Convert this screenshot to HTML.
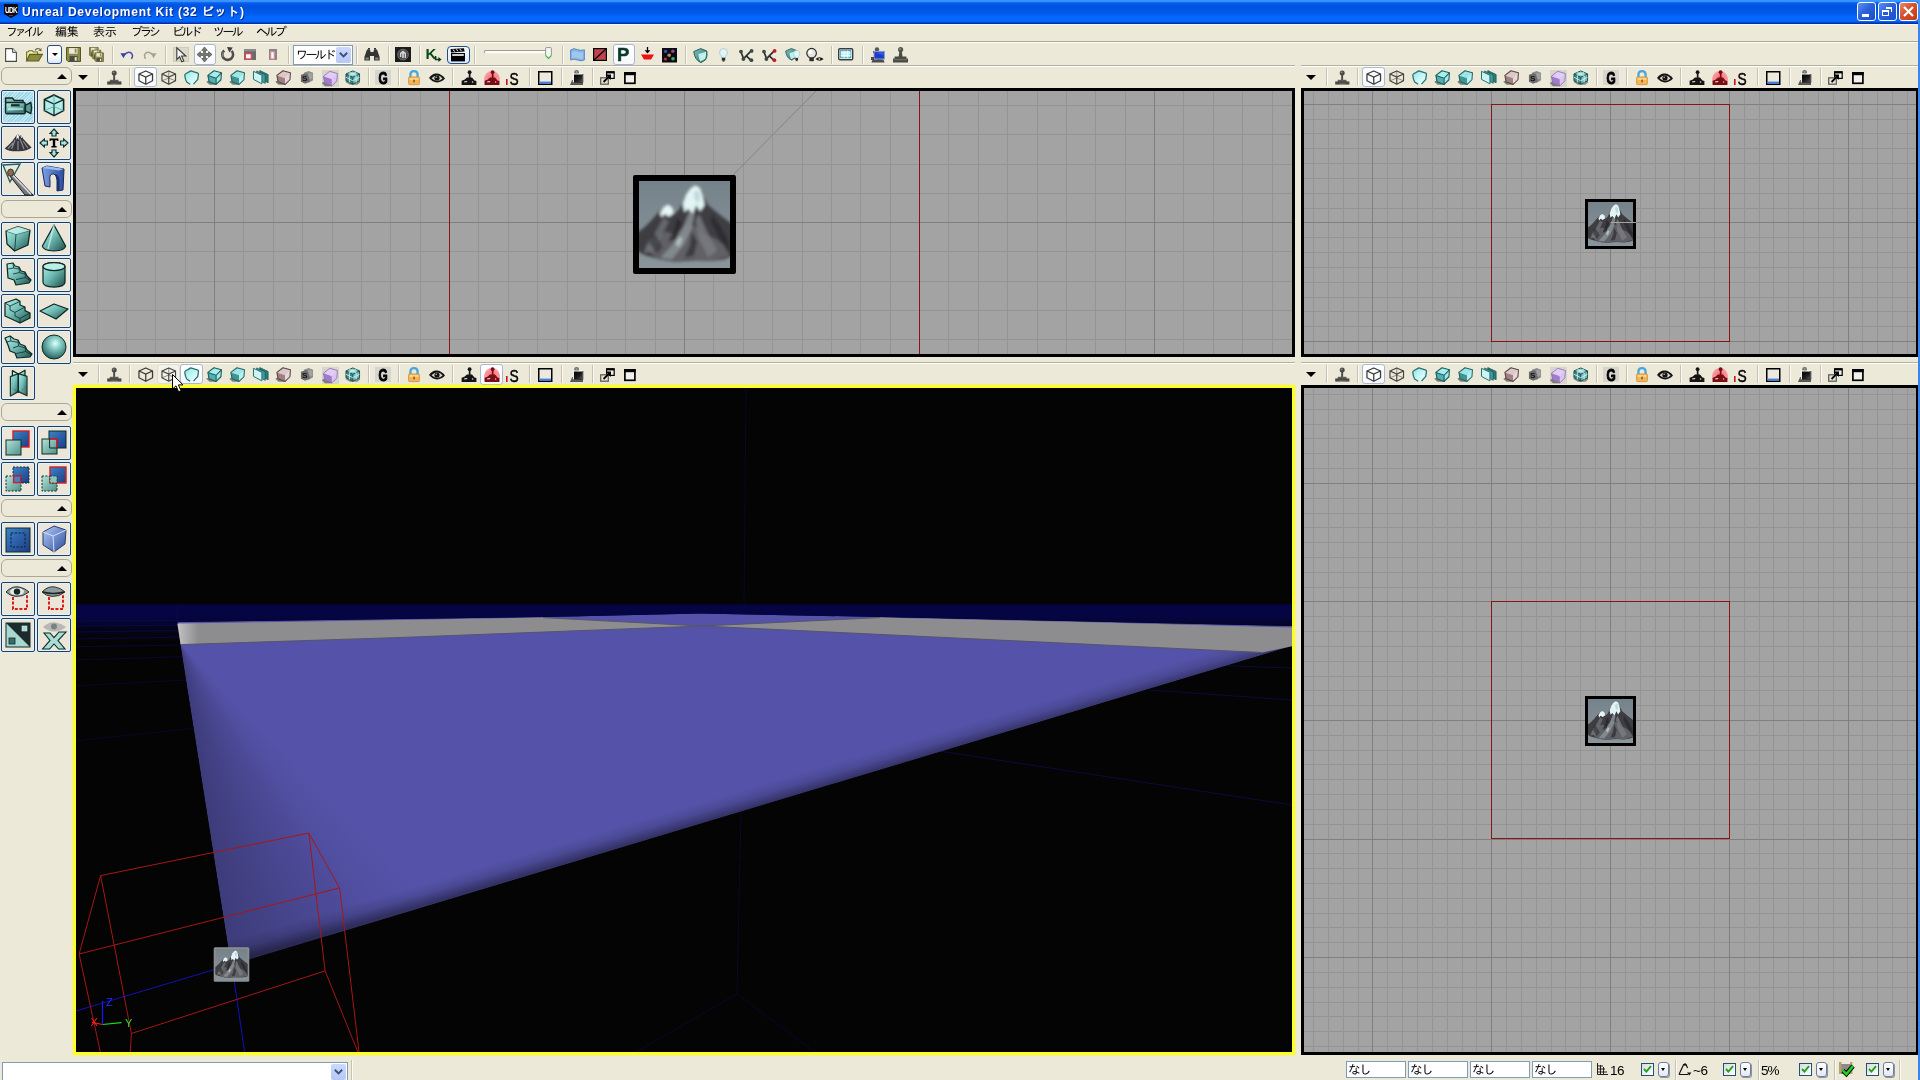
<!DOCTYPE html>
<html lang="ja"><head><meta charset="utf-8"><title>Unreal Development Kit</title>
<style>
html,body{margin:0;padding:0}
body{width:1920px;height:1080px;position:relative;overflow:hidden;background:#ece9d8;
font-family:"Liberation Sans","IPAGothic","Noto Sans CJK JP",sans-serif;font-size:12px;color:#000}
.a{position:absolute}
.jp,#menu span,.tx{will-change:transform}
.jp{font-family:"Liberation Sans","IPAGothic","Noto Sans CJK JP",sans-serif}
svg{position:absolute;overflow:visible}
#title{left:0;top:0;width:1920px;height:24px;
background:linear-gradient(180deg,#3a96fc 0px,#3a94fc 1.4px,#0c66f2 2.6px,#0558e8 4px,#0054e0 6px,#0054e0 8px,#0057e8 11px,#005cf0 14px,#0466fa 16.5px,#0468fc 20px,#0462f4 21.5px,#0444cc 22.6px,#0030a6 23.4px,#0030a6 24px)}
#title .t{left:22px;top:5px;color:#fff;font-weight:bold;font-size:12px;letter-spacing:.75px;white-space:nowrap;text-shadow:1px 1px 0 #0a2a88}
#menu{left:0;top:24px;width:1918px;height:17px;background:#ece9d8;border-top:1px solid #f6f9fc;box-sizing:border-box}
#menu span{position:absolute;top:1px;font-size:12px;line-height:13px;white-space:nowrap}
.hl{height:1px;background:#aca899}
.hw{height:1px;background:#fff}
.sep{width:1px;background:#c5c2b2;box-shadow:1px 0 0 #fbfaf6}
.vp{box-sizing:border-box;border:3px solid #000;background:#a3a3a3;overflow:hidden}
.btn{box-sizing:border-box;border:1px solid #b4c4dc;border-radius:3px;background:linear-gradient(180deg,#fff,#f4f6fb)}
.lbtn{box-sizing:border-box;width:34px;height:34px;border:1px solid #1e3f60;border-radius:2px;background:#ece6d8;box-shadow:0 0 0 1px #e2edf3,inset 0 0 0 1px #e6f1f8}
.bar{box-sizing:border-box;left:1px;width:71px;height:18px;border:1px solid #aaa798;border-radius:6px;background:#ece9d8}
.tri-u{width:0;height:0;border-left:5px solid transparent;border-right:5px solid transparent;border-bottom:5px solid #000}
.tri-d{width:0;height:0;border-left:5px solid transparent;border-right:5px solid transparent;border-top:5px solid #000}
.fld{box-sizing:border-box;height:17px;border:1px solid #7f9db9;background:#fff;font-size:12.5px;line-height:16px;padding-left:1px;letter-spacing:-1.6px}
.chk{box-sizing:border-box;width:13px;height:13px;border:1px solid #1c5180;background:linear-gradient(135deg,#dcdcd4,#fff)}
.dd{box-sizing:border-box;width:11px;height:15px;border:1px solid #6b7f9d;border-radius:3px;background:linear-gradient(180deg,#fff,#e4e8f0);box-shadow:1px 1px 0 #8a94a8}
</style></head><body>

<div id="title" class="a">
<svg class="a tx" style="left:3px;top:3px" width="16" height="16" viewBox="0 0 16 16"><path d="M1 1.5 Q1 1 1.5 1 H14.5 Q15 1 15 1.5 V11 L8 15 L1 11 Z" fill="#0c0c10"/><text x="8" y="10" font-family="Liberation Sans,sans-serif" font-size="8.5" font-weight="bold" fill="#fff" text-anchor="middle" letter-spacing="-0.9" textLength="12" lengthAdjust="spacingAndGlyphs">UDK</text><rect x="6" y="12" width="4" height="1" fill="#a02020"/></svg>
<div class="a t jp">Unreal Development Kit (32 ビット)</div>
<div class="a" style="left:1857px;top:2px;width:19px;height:19px;box-sizing:border-box;border:1px solid #fff;border-radius:3px;background:linear-gradient(135deg,#5c92f4 0%,#2a62dc 45%,#1c4cc8 100%)"><div class="a" style="left:4px;top:11px;width:7px;height:3px;background:#fff"></div></div>
<div class="a" style="left:1878px;top:2px;width:19px;height:19px;box-sizing:border-box;border:1px solid #fff;border-radius:3px;background:linear-gradient(135deg,#5c92f4 0%,#2a62dc 45%,#1c4cc8 100%)"><div class="a" style="left:7px;top:4px;width:6px;height:5px;box-sizing:border-box;border-right:1px solid #fff;border-top:2px solid #fff"></div><div class="a" style="left:3px;top:7px;width:7px;height:6px;box-sizing:border-box;border:1px solid #fff;border-top:2px solid #fff;background:#2a5cd4"></div></div>
<div class="a" style="left:1899px;top:2px;width:19px;height:19px;box-sizing:border-box;border:1px solid #fff;border-radius:3px;background:linear-gradient(135deg,#e88a6c 0%,#d8502c 45%,#c03a18 100%)"><svg style="left:3px;top:3px" width="11" height="11" viewBox="0 0 11 11"><path d="M1 1 L10 10 M10 1 L1 10" stroke="#fff" stroke-width="2.2" fill="none"/></svg></div>
</div>
<div id="menu" class="a jp">
<span style="left:6px;letter-spacing:-3.4px">ファイル</span>
<span style="left:55px;letter-spacing:-0.2px">編集</span>
<span style="left:93px;letter-spacing:-0.2px">表示</span>
<span style="left:131px;letter-spacing:-3px">ブラシ</span>
<span style="left:172px;letter-spacing:-2.8px">ビルド</span>
<span style="left:213px;letter-spacing:-2.6px">ツール</span>
<span style="left:256px;letter-spacing:-2.6px">ヘルプ</span>
</div>
<div class="a hl" style="left:0;top:41px;width:1918px"></div><div class="a hw" style="left:0;top:42px;width:1918px"></div>
<svg style="left:5px;top:48px" width="12" height="14" viewBox="0 0 12 14" ><path d="M.6 .6 H7.6 L11.4 4.4 V13.4 H.6 Z" fill="#fff" stroke="#4a4a4a" stroke-width="1.1"/><path d="M7.6 .6 V4.4 H11.4" fill="#e4e4e4" stroke="#4a4a4a" stroke-width="1"/></svg><svg style="left:26px;top:47px" width="17" height="15" viewBox="0 0 17 15" ><path d="M9 3.4 Q11.5 .2 14.4 2.6" fill="none" stroke="#6a6a3a" stroke-width="1.1"/><path d="M15.6 1 L15.4 4.6 L12.4 3.4 Z" fill="#6a6a3a"/><path d="M.6 14 V5 H2 L3 3.8 H6.4 L7.4 5 H11.6 V7.4" fill="#f6f2a0" stroke="#6e6e32" stroke-width="1.1"/><path d="M.6 14 L3.6 7.4 H16.4 L12.6 14 Z" fill="#8a8c3c" stroke="#5a5c24" stroke-width="1.1"/></svg><div class="a" style="left:47px;top:45px;width:14.5px;height:19px;box-sizing:border-box;border:1px solid #214f84;border-radius:3px;background:linear-gradient(180deg,#fff 0%,#fff 55%,#dfe6f2 100%)"></div><div class="a" style="left:51.6px;top:53px;width:0;height:0;border-left:3px solid transparent;border-right:3px solid transparent;border-top:3.4px solid #000"></div><svg style="left:66px;top:47px" width="15" height="15" viewBox="0 0 15 15" ><g transform="translate(0.5,0.5) scale(1)"><path d="M0 0 H14 V14 H1.6 L0 12.4 Z" fill="#8b8c4c" stroke="#55561e" stroke-width="1"/><rect x="2.6" y=".6" width="8.4" height="5.6" fill="#ece9d8"/><rect x="8.2" y="1.2" width="1.8" height="4" fill="#8b8c4c"/><rect x="3" y="8.6" width="8" height="5.4" fill="#4a4a42"/><rect x="8.2" y="9.6" width="2" height="3.6" fill="#ece9d8"/></g></svg><svg style="left:89px;top:47px" width="15" height="15" viewBox="0 0 15 15" ><g transform="translate(0.5,0.5) scale(0.62)"><path d="M0 0 H14 V14 H1.6 L0 12.4 Z" fill="#8b8c4c" stroke="#55561e" stroke-width="1"/><rect x="2.6" y=".6" width="8.4" height="5.6" fill="#ece9d8"/><rect x="8.2" y="1.2" width="1.8" height="4" fill="#8b8c4c"/><rect x="3" y="8.6" width="8" height="5.4" fill="#4a4a42"/><rect x="8.2" y="9.6" width="2" height="3.6" fill="#ece9d8"/></g><g transform="translate(3.2,3.2) scale(0.62)"><path d="M0 0 H14 V14 H1.6 L0 12.4 Z" fill="#8b8c4c" stroke="#55561e" stroke-width="1"/><rect x="2.6" y=".6" width="8.4" height="5.6" fill="#ece9d8"/><rect x="8.2" y="1.2" width="1.8" height="4" fill="#8b8c4c"/><rect x="3" y="8.6" width="8" height="5.4" fill="#4a4a42"/><rect x="8.2" y="9.6" width="2" height="3.6" fill="#ece9d8"/></g><g transform="translate(5.8,5.8) scale(0.62)"><path d="M0 0 H14 V14 H1.6 L0 12.4 Z" fill="#8b8c4c" stroke="#55561e" stroke-width="1"/><rect x="2.6" y=".6" width="8.4" height="5.6" fill="#ece9d8"/><rect x="8.2" y="1.2" width="1.8" height="4" fill="#8b8c4c"/><rect x="3" y="8.6" width="8" height="5.4" fill="#4a4a42"/><rect x="8.2" y="9.6" width="2" height="3.6" fill="#ece9d8"/></g></svg><div class="a sep" style="left:111.5px;top:46px;height:18px"></div><svg style="left:120px;top:50px" width="14" height="10" viewBox="0 0 14 10" ><path d="M4 5.2 Q8 .6 11.4 3.2 Q13.6 5.6 11.4 8.8" fill="none" stroke="#4a4ab0" stroke-width="1.5"/><path d="M.4 3.2 L5.8 3.2 L3.6 8.2 Z" fill="#3c3ca8"/></svg><svg style="left:143px;top:50px" width="14" height="10" viewBox="0 0 14 10" ><path d="M10 5.2 Q6 .6 2.6 3.2 Q.4 5.6 2.6 8.8" fill="none" stroke="#a4a29a" stroke-width="1.5"/><path d="M13.6 3.2 L8.2 3.2 L10.4 8.2 Z" fill="#a4a29a"/></svg><div class="a sep" style="left:165px;top:46px;height:18px"></div><div class="a" style="left:173px;top:47px;width:15.5px;height:15px;background:#dcd9ca;border:1px solid #cfccbc;box-sizing:border-box"></div><svg style="left:176px;top:47px" width="11" height="16" viewBox="0 0 11 16" ><path d="M.8 .8 V12.6 L3.6 9.8 L5.8 14.8 L7.8 13.9 L5.6 9 H9.8 Z" fill="#f4f4f4" stroke="#3a3a3a" stroke-width="1.1"/></svg><div class="a" style="left:193.5px;top:44px;width:22px;height:21px;box-sizing:border-box;border:1px solid #a9b7d2;border-radius:3px;background:linear-gradient(180deg,#fff,#f6f8fc)"></div><svg style="left:197px;top:47px" width="15" height="15" viewBox="0 0 15 15" ><path d="M7.5 0 L10.4 3.4 H8.4 V6.6 H11.6 V4.6 L15 7.5 L11.6 10.4 V8.4 H8.4 V11.6 H10.4 L7.5 15 L4.6 11.6 H6.6 V8.4 H3.4 V10.4 L0 7.5 L3.4 4.6 V6.6 H6.6 V3.4 H4.6 Z" fill="#7a7a78" stroke="#4a4a48" stroke-width=".7"/></svg><svg style="left:219.5px;top:47px" width="15" height="15" viewBox="0 0 15 15" ><path d="M4.2 3.4 A5.4 5.4 0 1 0 11.6 3.8" fill="none" stroke="#4e4e4e" stroke-width="2.6"/><path d="M7 0 L12.8 .6 L9.4 5.6 Z" fill="#3c3c3c"/><path d="M3.4 5 A4.4 4.4 0 0 0 3 10" fill="none" stroke="#8c8c8c" stroke-width="1"/></svg><svg style="left:243.5px;top:49px" width="12" height="11" viewBox="0 0 12 11" ><rect x="0" y="0" width="12" height="11" fill="#6b6b6b"/><rect x="0" y="0" width="12" height="2.4" fill="#8a8a8a"/><rect x="1.4" y="4.6" width="6" height="5.4" fill="#fff" stroke="#d84c5c" stroke-width="1.4"/></svg><svg style="left:268.5px;top:49px" width="8" height="11" viewBox="0 0 8 11" ><rect x="0" y="0" width="8" height="11" fill="#8a8686"/><rect x="1.6" y="2.6" width="3.8" height="7.4" fill="#fdf6f6" stroke="#d08c98" stroke-width="1.2"/></svg><div class="a sep" style="left:288px;top:46px;height:18px"></div><div class="a" style="left:293px;top:45px;width:60px;height:20px;box-sizing:border-box;border:1px solid #7f9db9;background:#fff"></div><div class="a jp" style="left:296px;top:49px;font-size:12px;line-height:12px;letter-spacing:-2.6px;white-space:nowrap">ワールド</div><div class="a" style="left:336px;top:47px;width:15px;height:16px;border-radius:2px;background:linear-gradient(180deg,#cbd9fb,#b6c8f4)"></div><svg style="left:339px;top:52px" width="9" height="6" viewBox="0 0 9 6" ><path d="M.8 .8 L4.5 4.4 L8.2 .8" fill="none" stroke="#3c507c" stroke-width="1.9"/></svg><div class="a sep" style="left:356px;top:46px;height:18px"></div><svg style="left:364px;top:48px" width="16" height="13" viewBox="0 0 16 13" ><path d="M3 1.4 H6 L6.6 4 H9.4 L10 1.4 H13 L15.6 9 V12.6 H10 V8 H6 V12.6 H.4 V9 Z" fill="#343434"/><rect x="1.6" y="9.6" width="3.2" height="2" fill="#8a8a8a"/><rect x="11.2" y="9.6" width="3.2" height="2" fill="#8a8a8a"/><rect x="4" y="0" width="2" height="1.6" fill="#343434"/><rect x="10" y="0" width="2" height="1.6" fill="#343434"/></svg><div class="a sep" style="left:387.5px;top:46px;height:18px"></div><svg style="left:395px;top:47px" width="16" height="15" viewBox="0 0 16 15" ><rect x="0" y="0" width="16" height="15" fill="#1c1c1c"/><circle cx="8" cy="7.6" r="5.4" fill="#4c4c4c"/><circle cx="8" cy="7.6" r="5.4" fill="none" stroke="#777" stroke-width=".8"/><path d="M5 6 L8 3.6 L11 6 V11 H9.6 V6.8 H8.8 V11 H7.2 V6.8 H6.4 V10 H5 Z" fill="#d4d4d4"/></svg><div class="a sep" style="left:418.5px;top:46px;height:18px"></div><svg style="left:426px;top:47px" width="16" height="15" viewBox="0 0 16 15"  class="tx"><text x="-.4" y="11.6" font-family="Liberation Sans,sans-serif" font-weight="bold" font-size="15" fill="#0a4a14">K</text><path d="M9.6 9 V12.6 H13" fill="none" stroke="#0a3a12" stroke-width="1.5"/><path d="M12.4 10 L15.6 12.6 L12.4 15 Z" fill="#0a3a12"/></svg><div class="a" style="left:446.5px;top:45.5px;width:23px;height:18.5px;box-sizing:border-box;border:1px solid #1f4e86;border-radius:4px;background:linear-gradient(180deg,#f4f8ff,#dde8f8)"></div><svg style="left:450px;top:48px" width="16" height="14" viewBox="0 0 16 14" ><path d="M.6 1 L14 .2 L14.6 3.4 L1 4.6 Z" fill="#000"/><path d="M3 1.4 L4.6 3.6 M6.4 1.2 L8 3.3 M9.8 1 L11.4 3" stroke="#fff" stroke-width="1"/><rect x="1" y="5" width="14" height="8.4" fill="#000"/><rect x="2.2" y="6.2" width="11.6" height="1.6" fill="#fff"/></svg><div class="a sep" style="left:474px;top:46px;height:18px"></div><div class="a" style="left:484px;top:50px;width:64px;height:4px;box-sizing:border-box;border:1px solid;border-color:#9d9c90 #f2f0e6 #f2f0e6 #9d9c90;border-radius:2px;background:#fcfcfa"></div><svg style="left:545px;top:47px" width="7" height="12" viewBox="0 0 7 12" ><path d="M.6 1.4 Q.6 .6 1.4 .6 H5.6 Q6.4 .6 6.4 1.4 V8.4 L3.5 11.4 L.6 8.4 Z" fill="#f6f6f2" stroke="#8c9a8c" stroke-width="1"/><path d="M.8 8.6 L3.5 11.4 L6.2 8.6" fill="none" stroke="#3cb84c" stroke-width="1.2"/></svg><div class="a sep" style="left:561.5px;top:46px;height:18px"></div><svg style="left:570px;top:48px" width="15" height="14" viewBox="0 0 15 14" ><path d="M.6 2 Q4 -.4 7.4 1.6 Q11 3 14.4 1.8 V12 Q11 13.6 7.4 12 Q4 10.4 .6 12 Z" fill="#86b4e4" stroke="#5a8cc4" stroke-width="1"/><path d="M2 4 Q5 2.4 8 4 Q11 5 13 4.2 V10.4 Q10 11.4 7.4 10 Q4.6 8.8 2 10 Z" fill="#a6cdf0" opacity=".8"/></svg><svg style="left:593px;top:48px" width="14" height="13" viewBox="0 0 14 13" ><rect x=".6" y=".6" width="12.8" height="11.8" fill="#c2424c" stroke="#000" stroke-width="1.2"/><path d="M1 12 L13 1" stroke="#000" stroke-width="1.2"/></svg><div class="a" style="left:612.5px;top:44px;width:22.5px;height:21px;box-sizing:border-box;border:1px solid #a9b7d2;border-radius:3px;background:linear-gradient(180deg,#fff,#f6f8fc)"></div><div class="a tx" style="left:617.2px;top:46.4px;font:bold 18.5px/18px 'Liberation Sans',sans-serif;color:#0b3a2a;-webkit-text-stroke:.5px #0b3a2a">P</div><svg style="left:641px;top:47px" width="13" height="14" viewBox="0 0 13 14" ><path d="M6.5 0 V5" stroke="#000" stroke-width="1.3"/><path d="M3.6 3.2 H9.4 L6.5 6.4 Z" fill="#000"/><path d="M0 7.6 H13 L10 12.6 H3 Z" fill="#f01010"/></svg><svg style="left:662px;top:47.5px" width="15" height="14.5" viewBox="0 0 15 14.5" ><rect x="0" y="0" width="15" height="14.5" fill="#0c0c10"/><circle cx="3.6" cy="3.4" r="1.7" fill="#3c58c4" opacity=".9"/><circle cx="10.8" cy="3.2" r="1.7" fill="#a04cb4" opacity=".9"/><circle cx="7.2" cy="7.2" r="1.8" fill="#c89a58" opacity=".9"/><circle cx="3.4" cy="11" r="1.6" fill="#c03a3a" opacity=".9"/><circle cx="11" cy="10.8" r="1.8" fill="#3cc470" opacity=".9"/></svg><div class="a sep" style="left:684.5px;top:46px;height:18px"></div><svg style="left:693px;top:47.5px" width="15" height="15" viewBox="0 0 15 15" ><defs><linearGradient id="rc1" x1="0" y1="0" x2="1" y2="1"><stop offset="0" stop-color="#7ec4c0"/><stop offset="1" stop-color="#2c6c68"/></linearGradient></defs><path d="M7.6 .6 L13.8 3 Q14.8 8 12.6 11.8 L8 14.6 Q1.6 12 .8 3.6 Z" fill="url(#rc1)" stroke="#2c5c5a" stroke-width="1"/><path d="M5.4 6 L13 3.8 Q13.6 8 12 11 L7.4 13.4 Q5.4 10 5.4 6 Z" fill="#bff0ec"/></svg><svg style="left:718.6px;top:48px" width="9" height="14" viewBox="0 0 9 14" ><path d="M4.5 .5 Q8.4 .6 8.4 4.4 Q8.2 6.6 6.6 8 V9.6 H2.4 V8 Q.8 6.6 .6 4.4 Q.6 .6 4.5 .5 Z" fill="#dff6f6" stroke="#a8c4c4" stroke-width=".8"/><rect x="2.8" y="9.8" width="3.4" height="2.8" fill="#2c2c2c"/><rect x="3.6" y="12.4" width="1.8" height="1.2" fill="#2c2c2c"/></svg><svg style="left:738.5px;top:49px" width="15" height="13" viewBox="0 0 15 13" ><path d="M2 3 L4.6 9.6 M4.6 9.6 L12.4 1.6 M7 6.6 L12 11.4" stroke="#2a2a2a" stroke-width="1.6" fill="none"/><circle cx="2" cy="2.6" r="1.9" fill="#3a4a44"/><circle cx="4.4" cy="10" r="1.9" fill="#3a4a44"/><circle cx="12.6" cy="1.9" r="1.9" fill="#3a4a44"/><circle cx="12.4" cy="11.2" r="1.9" fill="#3a4a44"/></svg><svg style="left:761.5px;top:49px" width="15" height="13" viewBox="0 0 15 13" ><path d="M2 3 L4.6 9.6 M4.6 9.6 L12.4 1.6 M7 6.6 L12 11.4" stroke="#2a2a2a" stroke-width="1.6" fill="none"/><circle cx="2" cy="2.6" r="1.9" fill="#3a4a44"/><circle cx="4.4" cy="10" r="1.9" fill="#3a4a44"/><circle cx="12.6" cy="1.9" r="1.9" fill="#c41c24"/><circle cx="12.4" cy="11.2" r="1.9" fill="#c41c24"/></svg><svg style="left:785px;top:47.5px" width="12.5" height="12.5" viewBox="0 0 15 15" ><defs><linearGradient id="rc2" x1="0" y1="0" x2="1" y2="1"><stop offset="0" stop-color="#7ec4c0"/><stop offset="1" stop-color="#2c6c68"/></linearGradient></defs><path d="M7.6 .6 L13.8 3 Q14.8 8 12.6 11.8 L8 14.6 Q1.6 12 .8 3.6 Z" fill="url(#rc2)" stroke="#2c5c5a" stroke-width="1"/><path d="M5.4 6 L13 3.8 Q13.6 8 12 11 L7.4 13.4 Q5.4 10 5.4 6 Z" fill="#bff0ec"/></svg><svg style="left:793.4px;top:50px" width="7.38" height="11.48" viewBox="0 0 9 14" ><path d="M4.5 .5 Q8.4 .6 8.4 4.4 Q8.2 6.6 6.6 8 V9.6 H2.4 V8 Q.8 6.6 .6 4.4 Q.6 .6 4.5 .5 Z" fill="#dff6f6" stroke="#a8c4c4" stroke-width=".8"/><rect x="2.8" y="9.8" width="3.4" height="2.8" fill="#2c2c2c"/><rect x="3.6" y="12.4" width="1.8" height="1.2" fill="#2c2c2c"/></svg><svg style="left:806px;top:47.5px" width="18" height="15" viewBox="0 0 18 15" ><circle cx="5.6" cy="5.2" r="4.8" fill="#e4e4e0" stroke="#2c2c2c" stroke-width="1.2"/><circle cx="4.4" cy="4" r="2" fill="#fff"/><rect x="3.4" y="9.6" width="4.4" height="3.6" fill="#2c2c2c"/><path d="M9.6 11 Q13.4 7.6 17.6 11 Q13.6 14.4 9.6 11 Z" fill="#111"/><circle cx="13.4" cy="11" r="1" fill="#ccc"/></svg><div class="a sep" style="left:830.5px;top:46px;height:18px"></div><svg style="left:838px;top:48px" width="15.5" height="12.5" viewBox="0 0 15.5 12.5" ><rect x=".7" y=".7" width="14" height="11" rx="1.2" fill="#dff" stroke="#3c3c44" stroke-width="1.4"/><rect x="2.6" y="2.6" width="10.2" height="7.2" fill="#b8ecf4" stroke="#4a8a9c" stroke-width=".8"/><path d="M2.6 5 H12.8 M2.6 7.4 H12.8 M6 2.6 V9.8 M9.4 2.6 V9.8" stroke="#f4ffff" stroke-width=".8"/></svg><div class="a sep" style="left:861.5px;top:46px;height:18px"></div><svg style="left:870.5px;top:47px" width="14" height="15.5" viewBox="0 0 14 15.5" ><circle cx="6" cy="2.4" r="2.2" fill="#55555a"/><path d="M2 4 H10 V6 H2 Z" fill="#3c3c40"/><rect x="3" y="4.4" width="10.4" height="7.6" fill="#1c3ccc" stroke="#8ca0c4" stroke-width="1"/><path d="M4 5.4 L12.4 8 V5.4 Z" fill="#3c64ec"/><rect x="6.4" y="12" width="3.4" height="1.4" fill="#8c8c90"/><path d="M.4 15.4 L1.6 12.6 H12.4 L13.6 15.4 Z" fill="#4c4c50"/><rect x="0" y="10" width="3" height="3" fill="#4c4c50"/></svg><svg style="left:893px;top:47px" width="15" height="15.5" viewBox="0 0 15 15.5" ><circle cx="7.6" cy="2.6" r="2.6" fill="#55554f"/><circle cx="7" cy="2" r="1" fill="#8a8a84"/><path d="M6.4 4.6 H8.8 L9.6 10 H5.6 Z" fill="#4a4a44"/><path d="M1.6 9.4 H13.4 V11.4 H15 V15.4 H0 V11.4 H1.6 Z" fill="#4a4a44"/><rect x="1" y="12.2" width="13" height="1" fill="#77776f"/></svg>
<div class="a hl" style="left:73px;top:65px;width:1222px;background:#b4b1a1"></div><div class="a hw" style="left:73px;top:66px;width:1222px"></div>
<div class="a hl" style="left:1301px;top:65px;width:617px;background:#b4b1a1"></div><div class="a hw" style="left:1301px;top:66px;width:617px"></div>
<div class="a hl" style="left:73px;top:362px;width:1222px;background:#b4b1a1"></div><div class="a hw" style="left:73px;top:363px;width:1222px"></div>
<div class="a hl" style="left:1301px;top:362px;width:617px;background:#b4b1a1"></div><div class="a hw" style="left:1301px;top:363px;width:617px"></div>
<div class="a tri-d" style="left:78px;top:75px"></div><div class="a sep" style="left:97.5px;top:68px;height:18px"></div><svg style="left:107px;top:69.5px" width="15" height="15" viewBox="0 0 15 15" ><circle cx="7.2" cy="3" r="2.5" fill="#4a4a46"/><circle cx="6.6" cy="2.3" r=".9" fill="#8c8c88"/><rect x="6.2" y="5" width="1.9" height="6" fill="#4a4a46"/><rect x="2.8" y="9.8" width="8.7" height="2.2" fill="#5a5a56"/><rect x=".2" y="11.4" width="14.2" height="3.2" fill="#4a4a46"/><rect x="4.2" y="13.7" width="6.2" height="1" fill="#9a9890"/></svg><div class="a sep" style="left:128.8px;top:68px;height:18px"></div><div class="a" style="left:134.1px;top:67px;width:22.6px;height:20.4px;box-sizing:border-box;border:1px solid #a9b7d2;border-radius:3px;background:linear-gradient(180deg,#fff,#f6f8fc)"></div><svg style="left:137.9px;top:70px" width="15.5" height="15" viewBox="0 0 16 16"  preserveAspectRatio="none"><polygon points="8,1 15,4.2 15,11.5 8,15.2 1,11.5 1,4.2" fill="none" stroke="#3a3a3a" stroke-width="1.3" stroke-linejoin="round"/><path d="M1 4.2 L8 7.6 L15 4.2 M8 7.6 L8 15.2" stroke="#3a3a3a" stroke-width="1.3" fill="none"/></svg><svg style="left:160.9px;top:70px" width="15.5" height="15" viewBox="0 0 16 16"  preserveAspectRatio="none"><path d="M8 1 V8.6 M8 8.6 L1 11.5 M8 8.6 L15 11.5" stroke="#8a8a86" stroke-width="1" fill="none"/><polygon points="8,1 15,4.2 15,11.5 8,15.2 1,11.5 1,4.2" fill="none" stroke="#444440" stroke-width="1.2" stroke-linejoin="round"/><path d="M1 4.2 L8 7.6 L15 4.2 M8 7.6 L8 15.2" stroke="#444440" stroke-width="1.2" fill="none"/></svg><svg style="left:183.9px;top:70px" width="15.5" height="15" viewBox="0 0 16 16"  preserveAspectRatio="none"><defs><linearGradient id="cu3" x1="0" y1="0" x2="1" y2="1"><stop offset="0" stop-color="#8fe4e4"/><stop offset=".5" stop-color="#c4f6f6"/><stop offset="1" stop-color="#f4ffff"/></linearGradient></defs><path d="M7 .9 L14.4 3.4 Q15 3.8 14.9 4.8 L14.2 10 L9.6 15.2 L6.6 15.2 L2.8 12.8 Q1.2 10 .8 5.6 Q.8 4.6 1.8 4 Z" fill="url(#cu3)"/><path d="M9.8 15 L14.2 10 L14.9 4.8 Q15 3.8 14.4 3.4 L7 .9 L1.8 4 Q.8 4.6 .8 5.6 Q1.2 10 2.8 12.8 L6.4 15.2" fill="none" stroke="#2a7272" stroke-width="1.35" stroke-linejoin="round"/></svg><svg style="left:206.9px;top:70px" width="15.5" height="15" viewBox="0 0 16 16"  preserveAspectRatio="none"><path d="M-.8 12.4 L2.6 15.8 H9.6 L9.4 13 L2.2 11 Z" fill="#66665e" opacity=".8"/><polygon points="7.2,0.8 14.9,3 9.4,8.8 0.9,5.8" fill="#a6eeee"/><polygon points="0.9,5.8 9.4,8.8 9.4,15.4 2.2,12.6" fill="#54b0b0"/><polygon points="9.4,8.8 14.9,3 14.4,10.4 9.4,15.4" fill="#a2eaea"/><polygon points="7.2,0.8 14.9,3 14.4,10.4 9.4,15.4 2.2,12.6 0.9,5.8" fill="none" stroke="#1d5c5c" stroke-width="1.15" stroke-linejoin="round"/><path d="M0.9 5.8 L9.4 8.8 L14.9 3 M9.4 8.8 L9.4 15.4" stroke="#1d5c5c" stroke-width="1.15" fill="none"/></svg><svg style="left:229.9px;top:70px" width="15.5" height="15" viewBox="0 0 16 16"  preserveAspectRatio="none"><path d="M-.8 12.4 L2.6 15.8 H9.6 L9.4 13 L2.2 11 Z" fill="#66665e" opacity=".8"/><polygon points="7.2,0.8 14.9,3 9.4,8.8 0.9,5.8" fill="#9be6e6"/><polygon points="0.9,5.8 9.4,8.8 9.4,15.4 2.2,12.6" fill="#3f9494"/><polygon points="9.4,8.8 14.9,3 14.4,10.4 9.4,15.4" fill="#b2f2f2"/><polygon points="7.2,0.8 14.9,3 14.4,10.4 9.4,15.4 2.2,12.6 0.9,5.8" fill="none" stroke="#236464" stroke-width="1.1" stroke-linejoin="round"/></svg><svg style="left:252.9px;top:70px" width="15.5" height="15" viewBox="0 0 16 16"  preserveAspectRatio="none"><path d="M7 .6 L15.6 4.8 V13.6 L7 9 Z" fill="#2c7c7c" stroke="#1c5454" stroke-width=".8"/><path d="M3.8 1 L12.6 5.2 V14.2 L3.8 9.4 Z" fill="#469c9c" stroke="#1c5454" stroke-width=".8"/><path d="M.5 1.4 L9.2 5.6 V14.8 L.5 10 Z" fill="#cdf4f4" stroke="#236a6a" stroke-width="1"/></svg><svg style="left:275.9px;top:70px" width="15.5" height="15" viewBox="0 0 16 16"  preserveAspectRatio="none"><path d="M-.8 12.4 L2.6 15.8 H9.6 L9.4 13 L2.2 11 Z" fill="#66665e" opacity=".8"/><polygon points="7.2,0.8 14.9,3 9.4,8.8 0.9,5.8" fill="#dcc8c8"/><polygon points="0.9,5.8 9.4,8.8 9.4,15.4 2.2,12.6" fill="#a08080"/><polygon points="9.4,8.8 14.9,3 14.4,10.4 9.4,15.4" fill="#e6d6da"/><polygon points="7.2,0.8 14.9,3 14.4,10.4 9.4,15.4 2.2,12.6 0.9,5.8" fill="none" stroke="#5a4444" stroke-width="1.1" stroke-linejoin="round"/></svg><svg style="left:298.9px;top:70px" width="15.5" height="15" viewBox="0 0 16 16"  preserveAspectRatio="none" class="tx"><path d="M5 3 L10 1 L14.5 3 V11 L10 13.5 L5 11.5 Z" fill="#8c8c8c"/><path d="M2 5 L7 3.4 L11 5.2 V12.4 L6.4 14.6 L2 12.6 Z" fill="#6c6c6c"/><path d="M9 4 L12 3 L14 4.5 V9 L11 10 Z" fill="#a2a2a2"/><text x="3.2" y="12" font-family="Liberation Sans,sans-serif" font-weight="bold" font-size="8.5" fill="#111">S</text></svg><svg style="left:321.9px;top:70px" width="17" height="17" viewBox="0 0 17 17" ><rect x="0" y="0" width="17" height="17" fill="#c9c6c2" opacity=".55"/><g transform="translate(.5,.5)"><path d="M-.8 12.4 L2.6 15.8 H9.6 L9.4 13 L2.2 11 Z" fill="#66665e" opacity=".8"/><polygon points="7.2,0.8 14.9,3 9.4,8.8 0.9,5.8" fill="#e2ccf8"/><polygon points="0.9,5.8 9.4,8.8 9.4,15.4 2.2,12.6" fill="#a07cc8"/><polygon points="9.4,8.8 14.9,3 14.4,10.4 9.4,15.4" fill="#dcc2f6"/><polygon points="7.2,0.8 14.9,3 14.4,10.4 9.4,15.4 2.2,12.6 0.9,5.8" fill="none" stroke="#866ca6" stroke-width="0.8" stroke-linejoin="round"/></g></svg><svg style="left:344.9px;top:70px" width="15.5" height="15" viewBox="0 0 16 16"  preserveAspectRatio="none"><path d="M0 12.5 L5 15.8 H13 L15.5 13 V11 Z" fill="#6e6e66" opacity=".75"/><polygon points="8,1 15,4.2 8,7.6 1,4.2" fill="#8cd0d0"/><polygon points="1,4.2 8,7.6 8,15.2 1,11.5" fill="#3c8484"/><polygon points="8,7.6 15,4.2 15,11.5 8,15.2" fill="#70bcbc"/><polygon points="8,1 15,4.2 15,11.5 8,15.2 1,11.5 1,4.2" fill="none" stroke="#1c4c4c" stroke-width="1" stroke-linejoin="round"/><path d="M1 4.2 L8 7.6 L15 4.2 M8 7.6 L8 15.2" stroke="#1c4c4c" stroke-width="1" fill="none"/><path d="M4.5 2.6 L11.5 5.9 M11.5 2.6 L4.5 5.9 M1 7.8 L8 11.4 L15 7.8 M4.5 5.9 V13.4 M11.5 5.9 V13.4" stroke="#d4f4f4" stroke-width=".9" fill="none"/></svg><div class="a sep" style="left:367.5px;top:68px;height:18px"></div><svg style="left:375px;top:70px" width="16" height="15" viewBox="0 0 16 15"  class="tx"><rect x="0" y="0" width="16" height="15" fill="#d6d5cf"/><text x="8" y="13.6" text-anchor="middle" font-family="Liberation Sans,sans-serif" font-weight="bold" font-size="16.5" fill="#000" textLength="9.2" lengthAdjust="spacingAndGlyphs" stroke="#000" stroke-width="1" stroke-linejoin="round">G</text></svg><div class="a sep" style="left:398px;top:68px;height:18px"></div><svg style="left:408px;top:70px" width="12" height="15" viewBox="0 0 12 15" ><path d="M2.4 8 V5 Q2.4 1.2 6 1.2 Q9.6 1.2 9.6 5 V8" fill="none" stroke="#48a6dc" stroke-width="2.3"/><rect x=".6" y="7" width="10.8" height="7.6" rx=".8" fill="#f3b555" stroke="#d8923a" stroke-width=".9"/><rect x="1.6" y="8" width="8.8" height="2" fill="#fbd48e"/><rect x="5.4" y="9.6" width="1.3" height="2.8" fill="#6a4a20"/></svg><svg style="left:429px;top:73px" width="16" height="10" viewBox="0 0 16 10" ><path d="M0 5 Q3.6 -0.4 8.4 .6 Q13 1.4 16 5.6 Q12.5 9.6 8 9.4 Q3.4 9.2 0 5 Z" fill="#141414"/><path d="M2.6 5.2 Q5 2.4 8.4 2.6 Q11.4 2.8 13.6 5.6 Q11 8 8 7.8 Q4.8 7.6 2.6 5.2 Z" fill="#d9d6c8"/><circle cx="8" cy="5" r="2.6" fill="#141414"/><circle cx="7.2" cy="4.2" r=".8" fill="#bbb"/></svg><div class="a sep" style="left:452px;top:68px;height:18px"></div><svg style="left:461px;top:70px" width="16" height="15" viewBox="0 0 16 15" ><circle cx="8.6" cy="2.2" r="1.9" fill="#141414"/><rect x="7.8" y="3.4" width="1.7" height="5" fill="#141414"/><path d="M6 7.6 L11 7.6 L13.5 10.5 L15.4 11 V15 H.6 V10.8 L3.4 9.8 Z" fill="#141414"/><path d="M3 11.6 L6 11 L6.4 12 L3.4 12.6 Z" fill="#e8e8e8"/><circle cx="11.6" cy="12" r=".8" fill="#ddd"/></svg><svg style="left:484px;top:70px" width="16" height="15" viewBox="0 0 16 15" ><defs><radialGradient id="gl4" cx=".5" cy=".55" r=".6"><stop offset="0" stop-color="#ff6a74"/><stop offset=".75" stop-color="#f99aa0"/><stop offset="1" stop-color="#f4b8b8" stop-opacity=".3"/></radialGradient></defs><path d="M0 15 V8 Q2 1 8 .6 Q14 1 16 8 V15 Z" fill="url(#gl4)"/><circle cx="8.6" cy="2.2" r="1.9" fill="#7a0c14"/><rect x="7.8" y="3.4" width="1.7" height="5" fill="#7a0c14"/><path d="M6 7.6 L11 7.6 L13.5 10.5 L15.4 11 V15 H.6 V10.8 L3.4 9.8 Z" fill="#7a0c14"/><path d="M3 11.6 L6 11 L6.4 12 L3.4 12.6 Z" fill="#e8e8e8"/><circle cx="11.6" cy="12" r=".8" fill="#ffb0b0"/></svg><svg style="left:505.6px;top:70.5px" width="14" height="16" viewBox="0 0 14 16"  class="tx"><rect x="0" y="8" width="1.6" height="6" fill="#c8141c"/><text x="3.6" y="14.4" font-family="Liberation Sans,sans-serif" font-size="16.5" fill="#000" textLength="9.2" lengthAdjust="spacingAndGlyphs" stroke="#000" stroke-width=".45">S</text></svg><div class="a sep" style="left:529px;top:68px;height:18px"></div><svg style="left:538px;top:71px" width="14.5" height="14" viewBox="0 0 14.5 14" ><rect x=".75" y=".75" width="13" height="12.5" fill="#eceade" stroke="#000" stroke-width="1.5"/><rect x="1.5" y="10.6" width="11.5" height="2" fill="#3f7ee6"/></svg><div class="a sep" style="left:560.5px;top:68px;height:18px"></div><svg style="left:570px;top:69.6px" width="14" height="15.5" viewBox="0 0 14 15.5" ><defs><linearGradient id="st5" x1="0" y1="0" x2="1" y2="1"><stop offset="0" stop-color="#000"/><stop offset=".55" stop-color="#1a1a1a"/><stop offset="1" stop-color="#5a5a5a"/></linearGradient></defs><circle cx="6.6" cy="2.4" r="2.4" fill="#6c6c68"/><circle cx="6.6" cy="2" r="1" fill="#9a9a96"/><path d="M0 15 L2.2 10 H13 V15 Z" fill="#55554f"/><rect x="3.4" y="4" width="9.4" height="8.6" fill="url(#st5)" stroke="#fff" stroke-width="1"/><path d="M12.8 4 V12.6 H3.4" fill="none" stroke="#222" stroke-width="1"/></svg><div class="a sep" style="left:591.5px;top:68px;height:18px"></div><svg style="left:600px;top:71px" width="15" height="14" viewBox="0 0 15 14" ><rect x="6.6" y=".8" width="7.6" height="6.6" fill="#f0efe6" stroke="#000" stroke-width="1.2"/><rect x="6.6" y=".4" width="7.6" height="2" fill="#000"/><rect x=".7" y="6.8" width="7.6" height="6.4" fill="#e6e4d8" stroke="#55554f" stroke-width="1.2"/><path d="M3.6 11 L9.4 5.2" stroke="#000" stroke-width="1.8"/><path d="M5.6 3.6 H11 V9 Z" fill="#000"/></svg><svg style="left:624.2px;top:72.2px" width="12" height="12.4" viewBox="0 0 12 12.4" ><rect x=".9" y=".9" width="10" height="10.4" fill="#f1f0ea" stroke="#000" stroke-width="1.7"/><rect x=".1" y="0" width="11.6" height="3.2" fill="#000"/></svg>
<div class="a tri-d" style="left:1306px;top:75px"></div><div class="a sep" style="left:1325.5px;top:68px;height:18px"></div><svg style="left:1335px;top:69.5px" width="15" height="15" viewBox="0 0 15 15" ><circle cx="7.2" cy="3" r="2.5" fill="#4a4a46"/><circle cx="6.6" cy="2.3" r=".9" fill="#8c8c88"/><rect x="6.2" y="5" width="1.9" height="6" fill="#4a4a46"/><rect x="2.8" y="9.8" width="8.7" height="2.2" fill="#5a5a56"/><rect x=".2" y="11.4" width="14.2" height="3.2" fill="#4a4a46"/><rect x="4.2" y="13.7" width="6.2" height="1" fill="#9a9890"/></svg><div class="a sep" style="left:1356.8px;top:68px;height:18px"></div><div class="a" style="left:1362.1px;top:67px;width:22.6px;height:20.4px;box-sizing:border-box;border:1px solid #a9b7d2;border-radius:3px;background:linear-gradient(180deg,#fff,#f6f8fc)"></div><svg style="left:1365.9px;top:70px" width="15.5" height="15" viewBox="0 0 16 16"  preserveAspectRatio="none"><polygon points="8,1 15,4.2 15,11.5 8,15.2 1,11.5 1,4.2" fill="none" stroke="#3a3a3a" stroke-width="1.3" stroke-linejoin="round"/><path d="M1 4.2 L8 7.6 L15 4.2 M8 7.6 L8 15.2" stroke="#3a3a3a" stroke-width="1.3" fill="none"/></svg><svg style="left:1388.9px;top:70px" width="15.5" height="15" viewBox="0 0 16 16"  preserveAspectRatio="none"><path d="M8 1 V8.6 M8 8.6 L1 11.5 M8 8.6 L15 11.5" stroke="#8a8a86" stroke-width="1" fill="none"/><polygon points="8,1 15,4.2 15,11.5 8,15.2 1,11.5 1,4.2" fill="none" stroke="#444440" stroke-width="1.2" stroke-linejoin="round"/><path d="M1 4.2 L8 7.6 L15 4.2 M8 7.6 L8 15.2" stroke="#444440" stroke-width="1.2" fill="none"/></svg><svg style="left:1411.9px;top:70px" width="15.5" height="15" viewBox="0 0 16 16"  preserveAspectRatio="none"><defs><linearGradient id="cu6" x1="0" y1="0" x2="1" y2="1"><stop offset="0" stop-color="#8fe4e4"/><stop offset=".5" stop-color="#c4f6f6"/><stop offset="1" stop-color="#f4ffff"/></linearGradient></defs><path d="M7 .9 L14.4 3.4 Q15 3.8 14.9 4.8 L14.2 10 L9.6 15.2 L6.6 15.2 L2.8 12.8 Q1.2 10 .8 5.6 Q.8 4.6 1.8 4 Z" fill="url(#cu6)"/><path d="M9.8 15 L14.2 10 L14.9 4.8 Q15 3.8 14.4 3.4 L7 .9 L1.8 4 Q.8 4.6 .8 5.6 Q1.2 10 2.8 12.8 L6.4 15.2" fill="none" stroke="#2a7272" stroke-width="1.35" stroke-linejoin="round"/></svg><svg style="left:1434.9px;top:70px" width="15.5" height="15" viewBox="0 0 16 16"  preserveAspectRatio="none"><path d="M-.8 12.4 L2.6 15.8 H9.6 L9.4 13 L2.2 11 Z" fill="#66665e" opacity=".8"/><polygon points="7.2,0.8 14.9,3 9.4,8.8 0.9,5.8" fill="#a6eeee"/><polygon points="0.9,5.8 9.4,8.8 9.4,15.4 2.2,12.6" fill="#54b0b0"/><polygon points="9.4,8.8 14.9,3 14.4,10.4 9.4,15.4" fill="#a2eaea"/><polygon points="7.2,0.8 14.9,3 14.4,10.4 9.4,15.4 2.2,12.6 0.9,5.8" fill="none" stroke="#1d5c5c" stroke-width="1.15" stroke-linejoin="round"/><path d="M0.9 5.8 L9.4 8.8 L14.9 3 M9.4 8.8 L9.4 15.4" stroke="#1d5c5c" stroke-width="1.15" fill="none"/></svg><svg style="left:1457.9px;top:70px" width="15.5" height="15" viewBox="0 0 16 16"  preserveAspectRatio="none"><path d="M-.8 12.4 L2.6 15.8 H9.6 L9.4 13 L2.2 11 Z" fill="#66665e" opacity=".8"/><polygon points="7.2,0.8 14.9,3 9.4,8.8 0.9,5.8" fill="#9be6e6"/><polygon points="0.9,5.8 9.4,8.8 9.4,15.4 2.2,12.6" fill="#3f9494"/><polygon points="9.4,8.8 14.9,3 14.4,10.4 9.4,15.4" fill="#b2f2f2"/><polygon points="7.2,0.8 14.9,3 14.4,10.4 9.4,15.4 2.2,12.6 0.9,5.8" fill="none" stroke="#236464" stroke-width="1.1" stroke-linejoin="round"/></svg><svg style="left:1480.9px;top:70px" width="15.5" height="15" viewBox="0 0 16 16"  preserveAspectRatio="none"><path d="M7 .6 L15.6 4.8 V13.6 L7 9 Z" fill="#2c7c7c" stroke="#1c5454" stroke-width=".8"/><path d="M3.8 1 L12.6 5.2 V14.2 L3.8 9.4 Z" fill="#469c9c" stroke="#1c5454" stroke-width=".8"/><path d="M.5 1.4 L9.2 5.6 V14.8 L.5 10 Z" fill="#cdf4f4" stroke="#236a6a" stroke-width="1"/></svg><svg style="left:1503.9px;top:70px" width="15.5" height="15" viewBox="0 0 16 16"  preserveAspectRatio="none"><path d="M-.8 12.4 L2.6 15.8 H9.6 L9.4 13 L2.2 11 Z" fill="#66665e" opacity=".8"/><polygon points="7.2,0.8 14.9,3 9.4,8.8 0.9,5.8" fill="#dcc8c8"/><polygon points="0.9,5.8 9.4,8.8 9.4,15.4 2.2,12.6" fill="#a08080"/><polygon points="9.4,8.8 14.9,3 14.4,10.4 9.4,15.4" fill="#e6d6da"/><polygon points="7.2,0.8 14.9,3 14.4,10.4 9.4,15.4 2.2,12.6 0.9,5.8" fill="none" stroke="#5a4444" stroke-width="1.1" stroke-linejoin="round"/></svg><svg style="left:1526.9px;top:70px" width="15.5" height="15" viewBox="0 0 16 16"  preserveAspectRatio="none" class="tx"><path d="M5 3 L10 1 L14.5 3 V11 L10 13.5 L5 11.5 Z" fill="#8c8c8c"/><path d="M2 5 L7 3.4 L11 5.2 V12.4 L6.4 14.6 L2 12.6 Z" fill="#6c6c6c"/><path d="M9 4 L12 3 L14 4.5 V9 L11 10 Z" fill="#a2a2a2"/><text x="3.2" y="12" font-family="Liberation Sans,sans-serif" font-weight="bold" font-size="8.5" fill="#111">S</text></svg><svg style="left:1549.9px;top:70px" width="17" height="17" viewBox="0 0 17 17" ><rect x="0" y="0" width="17" height="17" fill="#c9c6c2" opacity=".55"/><g transform="translate(.5,.5)"><path d="M-.8 12.4 L2.6 15.8 H9.6 L9.4 13 L2.2 11 Z" fill="#66665e" opacity=".8"/><polygon points="7.2,0.8 14.9,3 9.4,8.8 0.9,5.8" fill="#e2ccf8"/><polygon points="0.9,5.8 9.4,8.8 9.4,15.4 2.2,12.6" fill="#a07cc8"/><polygon points="9.4,8.8 14.9,3 14.4,10.4 9.4,15.4" fill="#dcc2f6"/><polygon points="7.2,0.8 14.9,3 14.4,10.4 9.4,15.4 2.2,12.6 0.9,5.8" fill="none" stroke="#866ca6" stroke-width="0.8" stroke-linejoin="round"/></g></svg><svg style="left:1572.9px;top:70px" width="15.5" height="15" viewBox="0 0 16 16"  preserveAspectRatio="none"><path d="M0 12.5 L5 15.8 H13 L15.5 13 V11 Z" fill="#6e6e66" opacity=".75"/><polygon points="8,1 15,4.2 8,7.6 1,4.2" fill="#8cd0d0"/><polygon points="1,4.2 8,7.6 8,15.2 1,11.5" fill="#3c8484"/><polygon points="8,7.6 15,4.2 15,11.5 8,15.2" fill="#70bcbc"/><polygon points="8,1 15,4.2 15,11.5 8,15.2 1,11.5 1,4.2" fill="none" stroke="#1c4c4c" stroke-width="1" stroke-linejoin="round"/><path d="M1 4.2 L8 7.6 L15 4.2 M8 7.6 L8 15.2" stroke="#1c4c4c" stroke-width="1" fill="none"/><path d="M4.5 2.6 L11.5 5.9 M11.5 2.6 L4.5 5.9 M1 7.8 L8 11.4 L15 7.8 M4.5 5.9 V13.4 M11.5 5.9 V13.4" stroke="#d4f4f4" stroke-width=".9" fill="none"/></svg><div class="a sep" style="left:1595.5px;top:68px;height:18px"></div><svg style="left:1603px;top:70px" width="16" height="15" viewBox="0 0 16 15"  class="tx"><rect x="0" y="0" width="16" height="15" fill="#d6d5cf"/><text x="8" y="13.6" text-anchor="middle" font-family="Liberation Sans,sans-serif" font-weight="bold" font-size="16.5" fill="#000" textLength="9.2" lengthAdjust="spacingAndGlyphs" stroke="#000" stroke-width="1" stroke-linejoin="round">G</text></svg><div class="a sep" style="left:1626px;top:68px;height:18px"></div><svg style="left:1636px;top:70px" width="12" height="15" viewBox="0 0 12 15" ><path d="M2.4 8 V5 Q2.4 1.2 6 1.2 Q9.6 1.2 9.6 5 V8" fill="none" stroke="#48a6dc" stroke-width="2.3"/><rect x=".6" y="7" width="10.8" height="7.6" rx=".8" fill="#f3b555" stroke="#d8923a" stroke-width=".9"/><rect x="1.6" y="8" width="8.8" height="2" fill="#fbd48e"/><rect x="5.4" y="9.6" width="1.3" height="2.8" fill="#6a4a20"/></svg><svg style="left:1657px;top:73px" width="16" height="10" viewBox="0 0 16 10" ><path d="M0 5 Q3.6 -0.4 8.4 .6 Q13 1.4 16 5.6 Q12.5 9.6 8 9.4 Q3.4 9.2 0 5 Z" fill="#141414"/><path d="M2.6 5.2 Q5 2.4 8.4 2.6 Q11.4 2.8 13.6 5.6 Q11 8 8 7.8 Q4.8 7.6 2.6 5.2 Z" fill="#d9d6c8"/><circle cx="8" cy="5" r="2.6" fill="#141414"/><circle cx="7.2" cy="4.2" r=".8" fill="#bbb"/></svg><div class="a sep" style="left:1680px;top:68px;height:18px"></div><svg style="left:1689px;top:70px" width="16" height="15" viewBox="0 0 16 15" ><circle cx="8.6" cy="2.2" r="1.9" fill="#141414"/><rect x="7.8" y="3.4" width="1.7" height="5" fill="#141414"/><path d="M6 7.6 L11 7.6 L13.5 10.5 L15.4 11 V15 H.6 V10.8 L3.4 9.8 Z" fill="#141414"/><path d="M3 11.6 L6 11 L6.4 12 L3.4 12.6 Z" fill="#e8e8e8"/><circle cx="11.6" cy="12" r=".8" fill="#ddd"/></svg><svg style="left:1712px;top:70px" width="16" height="15" viewBox="0 0 16 15" ><defs><radialGradient id="gl7" cx=".5" cy=".55" r=".6"><stop offset="0" stop-color="#ff6a74"/><stop offset=".75" stop-color="#f99aa0"/><stop offset="1" stop-color="#f4b8b8" stop-opacity=".3"/></radialGradient></defs><path d="M0 15 V8 Q2 1 8 .6 Q14 1 16 8 V15 Z" fill="url(#gl7)"/><circle cx="8.6" cy="2.2" r="1.9" fill="#7a0c14"/><rect x="7.8" y="3.4" width="1.7" height="5" fill="#7a0c14"/><path d="M6 7.6 L11 7.6 L13.5 10.5 L15.4 11 V15 H.6 V10.8 L3.4 9.8 Z" fill="#7a0c14"/><path d="M3 11.6 L6 11 L6.4 12 L3.4 12.6 Z" fill="#e8e8e8"/><circle cx="11.6" cy="12" r=".8" fill="#ffb0b0"/></svg><svg style="left:1733.6px;top:70.5px" width="14" height="16" viewBox="0 0 14 16"  class="tx"><rect x="0" y="8" width="1.6" height="6" fill="#c8141c"/><text x="3.6" y="14.4" font-family="Liberation Sans,sans-serif" font-size="16.5" fill="#000" textLength="9.2" lengthAdjust="spacingAndGlyphs" stroke="#000" stroke-width=".45">S</text></svg><div class="a sep" style="left:1757px;top:68px;height:18px"></div><svg style="left:1766px;top:71px" width="14.5" height="14" viewBox="0 0 14.5 14" ><rect x=".75" y=".75" width="13" height="12.5" fill="#eceade" stroke="#000" stroke-width="1.5"/><rect x="1.5" y="10.6" width="11.5" height="2" fill="#3f7ee6"/></svg><div class="a sep" style="left:1788.5px;top:68px;height:18px"></div><svg style="left:1798px;top:69.6px" width="14" height="15.5" viewBox="0 0 14 15.5" ><defs><linearGradient id="st8" x1="0" y1="0" x2="1" y2="1"><stop offset="0" stop-color="#000"/><stop offset=".55" stop-color="#1a1a1a"/><stop offset="1" stop-color="#5a5a5a"/></linearGradient></defs><circle cx="6.6" cy="2.4" r="2.4" fill="#6c6c68"/><circle cx="6.6" cy="2" r="1" fill="#9a9a96"/><path d="M0 15 L2.2 10 H13 V15 Z" fill="#55554f"/><rect x="3.4" y="4" width="9.4" height="8.6" fill="url(#st8)" stroke="#fff" stroke-width="1"/><path d="M12.8 4 V12.6 H3.4" fill="none" stroke="#222" stroke-width="1"/></svg><div class="a sep" style="left:1819.5px;top:68px;height:18px"></div><svg style="left:1828px;top:71px" width="15" height="14" viewBox="0 0 15 14" ><rect x="6.6" y=".8" width="7.6" height="6.6" fill="#f0efe6" stroke="#000" stroke-width="1.2"/><rect x="6.6" y=".4" width="7.6" height="2" fill="#000"/><rect x=".7" y="6.8" width="7.6" height="6.4" fill="#e6e4d8" stroke="#55554f" stroke-width="1.2"/><path d="M3.6 11 L9.4 5.2" stroke="#000" stroke-width="1.8"/><path d="M5.6 3.6 H11 V9 Z" fill="#000"/></svg><svg style="left:1852.2px;top:72.2px" width="12" height="12.4" viewBox="0 0 12 12.4" ><rect x=".9" y=".9" width="10" height="10.4" fill="#f1f0ea" stroke="#000" stroke-width="1.7"/><rect x=".1" y="0" width="11.6" height="3.2" fill="#000"/></svg>
<div class="a tri-d" style="left:78px;top:372px"></div><div class="a sep" style="left:97.5px;top:365px;height:18px"></div><svg style="left:107px;top:366.5px" width="15" height="15" viewBox="0 0 15 15" ><circle cx="7.2" cy="3" r="2.5" fill="#4a4a46"/><circle cx="6.6" cy="2.3" r=".9" fill="#8c8c88"/><rect x="6.2" y="5" width="1.9" height="6" fill="#4a4a46"/><rect x="2.8" y="9.8" width="8.7" height="2.2" fill="#5a5a56"/><rect x=".2" y="11.4" width="14.2" height="3.2" fill="#4a4a46"/><rect x="4.2" y="13.7" width="6.2" height="1" fill="#9a9890"/></svg><div class="a sep" style="left:128.8px;top:365px;height:18px"></div><svg style="left:137.9px;top:367px" width="15.5" height="15" viewBox="0 0 16 16"  preserveAspectRatio="none"><polygon points="8,1 15,4.2 15,11.5 8,15.2 1,11.5 1,4.2" fill="none" stroke="#3a3a3a" stroke-width="1.3" stroke-linejoin="round"/><path d="M1 4.2 L8 7.6 L15 4.2 M8 7.6 L8 15.2" stroke="#3a3a3a" stroke-width="1.3" fill="none"/></svg><div class="a" style="left:157.1px;top:364px;width:22.6px;height:20.4px;box-sizing:border-box;border:1px solid #e0ddd0;border-radius:3px;background:#f3f2ea"></div><svg style="left:160.9px;top:367px" width="15.5" height="15" viewBox="0 0 16 16"  preserveAspectRatio="none"><path d="M8 1 V8.6 M8 8.6 L1 11.5 M8 8.6 L15 11.5" stroke="#8a8a86" stroke-width="1" fill="none"/><polygon points="8,1 15,4.2 15,11.5 8,15.2 1,11.5 1,4.2" fill="none" stroke="#444440" stroke-width="1.2" stroke-linejoin="round"/><path d="M1 4.2 L8 7.6 L15 4.2 M8 7.6 L8 15.2" stroke="#444440" stroke-width="1.2" fill="none"/></svg><div class="a" style="left:180.1px;top:364px;width:22.6px;height:20.4px;box-sizing:border-box;border:1px solid #a9b7d2;border-radius:3px;background:linear-gradient(180deg,#fff,#f6f8fc)"></div><svg style="left:183.9px;top:367px" width="15.5" height="15" viewBox="0 0 16 16"  preserveAspectRatio="none"><defs><linearGradient id="cu9" x1="0" y1="0" x2="1" y2="1"><stop offset="0" stop-color="#8fe4e4"/><stop offset=".5" stop-color="#c4f6f6"/><stop offset="1" stop-color="#f4ffff"/></linearGradient></defs><path d="M7 .9 L14.4 3.4 Q15 3.8 14.9 4.8 L14.2 10 L9.6 15.2 L6.6 15.2 L2.8 12.8 Q1.2 10 .8 5.6 Q.8 4.6 1.8 4 Z" fill="url(#cu9)"/><path d="M9.8 15 L14.2 10 L14.9 4.8 Q15 3.8 14.4 3.4 L7 .9 L1.8 4 Q.8 4.6 .8 5.6 Q1.2 10 2.8 12.8 L6.4 15.2" fill="none" stroke="#2a7272" stroke-width="1.35" stroke-linejoin="round"/></svg><svg style="left:206.9px;top:367px" width="15.5" height="15" viewBox="0 0 16 16"  preserveAspectRatio="none"><path d="M-.8 12.4 L2.6 15.8 H9.6 L9.4 13 L2.2 11 Z" fill="#66665e" opacity=".8"/><polygon points="7.2,0.8 14.9,3 9.4,8.8 0.9,5.8" fill="#a6eeee"/><polygon points="0.9,5.8 9.4,8.8 9.4,15.4 2.2,12.6" fill="#54b0b0"/><polygon points="9.4,8.8 14.9,3 14.4,10.4 9.4,15.4" fill="#a2eaea"/><polygon points="7.2,0.8 14.9,3 14.4,10.4 9.4,15.4 2.2,12.6 0.9,5.8" fill="none" stroke="#1d5c5c" stroke-width="1.15" stroke-linejoin="round"/><path d="M0.9 5.8 L9.4 8.8 L14.9 3 M9.4 8.8 L9.4 15.4" stroke="#1d5c5c" stroke-width="1.15" fill="none"/></svg><svg style="left:229.9px;top:367px" width="15.5" height="15" viewBox="0 0 16 16"  preserveAspectRatio="none"><path d="M-.8 12.4 L2.6 15.8 H9.6 L9.4 13 L2.2 11 Z" fill="#66665e" opacity=".8"/><polygon points="7.2,0.8 14.9,3 9.4,8.8 0.9,5.8" fill="#9be6e6"/><polygon points="0.9,5.8 9.4,8.8 9.4,15.4 2.2,12.6" fill="#3f9494"/><polygon points="9.4,8.8 14.9,3 14.4,10.4 9.4,15.4" fill="#b2f2f2"/><polygon points="7.2,0.8 14.9,3 14.4,10.4 9.4,15.4 2.2,12.6 0.9,5.8" fill="none" stroke="#236464" stroke-width="1.1" stroke-linejoin="round"/></svg><svg style="left:252.9px;top:367px" width="15.5" height="15" viewBox="0 0 16 16"  preserveAspectRatio="none"><path d="M7 .6 L15.6 4.8 V13.6 L7 9 Z" fill="#2c7c7c" stroke="#1c5454" stroke-width=".8"/><path d="M3.8 1 L12.6 5.2 V14.2 L3.8 9.4 Z" fill="#469c9c" stroke="#1c5454" stroke-width=".8"/><path d="M.5 1.4 L9.2 5.6 V14.8 L.5 10 Z" fill="#cdf4f4" stroke="#236a6a" stroke-width="1"/></svg><svg style="left:275.9px;top:367px" width="15.5" height="15" viewBox="0 0 16 16"  preserveAspectRatio="none"><path d="M-.8 12.4 L2.6 15.8 H9.6 L9.4 13 L2.2 11 Z" fill="#66665e" opacity=".8"/><polygon points="7.2,0.8 14.9,3 9.4,8.8 0.9,5.8" fill="#dcc8c8"/><polygon points="0.9,5.8 9.4,8.8 9.4,15.4 2.2,12.6" fill="#a08080"/><polygon points="9.4,8.8 14.9,3 14.4,10.4 9.4,15.4" fill="#e6d6da"/><polygon points="7.2,0.8 14.9,3 14.4,10.4 9.4,15.4 2.2,12.6 0.9,5.8" fill="none" stroke="#5a4444" stroke-width="1.1" stroke-linejoin="round"/></svg><svg style="left:298.9px;top:367px" width="15.5" height="15" viewBox="0 0 16 16"  preserveAspectRatio="none" class="tx"><path d="M5 3 L10 1 L14.5 3 V11 L10 13.5 L5 11.5 Z" fill="#8c8c8c"/><path d="M2 5 L7 3.4 L11 5.2 V12.4 L6.4 14.6 L2 12.6 Z" fill="#6c6c6c"/><path d="M9 4 L12 3 L14 4.5 V9 L11 10 Z" fill="#a2a2a2"/><text x="3.2" y="12" font-family="Liberation Sans,sans-serif" font-weight="bold" font-size="8.5" fill="#111">S</text></svg><svg style="left:321.9px;top:367px" width="17" height="17" viewBox="0 0 17 17" ><rect x="0" y="0" width="17" height="17" fill="#c9c6c2" opacity=".55"/><g transform="translate(.5,.5)"><path d="M-.8 12.4 L2.6 15.8 H9.6 L9.4 13 L2.2 11 Z" fill="#66665e" opacity=".8"/><polygon points="7.2,0.8 14.9,3 9.4,8.8 0.9,5.8" fill="#e2ccf8"/><polygon points="0.9,5.8 9.4,8.8 9.4,15.4 2.2,12.6" fill="#a07cc8"/><polygon points="9.4,8.8 14.9,3 14.4,10.4 9.4,15.4" fill="#dcc2f6"/><polygon points="7.2,0.8 14.9,3 14.4,10.4 9.4,15.4 2.2,12.6 0.9,5.8" fill="none" stroke="#866ca6" stroke-width="0.8" stroke-linejoin="round"/></g></svg><svg style="left:344.9px;top:367px" width="15.5" height="15" viewBox="0 0 16 16"  preserveAspectRatio="none"><path d="M0 12.5 L5 15.8 H13 L15.5 13 V11 Z" fill="#6e6e66" opacity=".75"/><polygon points="8,1 15,4.2 8,7.6 1,4.2" fill="#8cd0d0"/><polygon points="1,4.2 8,7.6 8,15.2 1,11.5" fill="#3c8484"/><polygon points="8,7.6 15,4.2 15,11.5 8,15.2" fill="#70bcbc"/><polygon points="8,1 15,4.2 15,11.5 8,15.2 1,11.5 1,4.2" fill="none" stroke="#1c4c4c" stroke-width="1" stroke-linejoin="round"/><path d="M1 4.2 L8 7.6 L15 4.2 M8 7.6 L8 15.2" stroke="#1c4c4c" stroke-width="1" fill="none"/><path d="M4.5 2.6 L11.5 5.9 M11.5 2.6 L4.5 5.9 M1 7.8 L8 11.4 L15 7.8 M4.5 5.9 V13.4 M11.5 5.9 V13.4" stroke="#d4f4f4" stroke-width=".9" fill="none"/></svg><div class="a sep" style="left:367.5px;top:365px;height:18px"></div><svg style="left:375px;top:367px" width="16" height="15" viewBox="0 0 16 15"  class="tx"><rect x="0" y="0" width="16" height="15" fill="#d6d5cf"/><text x="8" y="13.6" text-anchor="middle" font-family="Liberation Sans,sans-serif" font-weight="bold" font-size="16.5" fill="#000" textLength="9.2" lengthAdjust="spacingAndGlyphs" stroke="#000" stroke-width="1" stroke-linejoin="round">G</text></svg><div class="a sep" style="left:398px;top:365px;height:18px"></div><svg style="left:408px;top:367px" width="12" height="15" viewBox="0 0 12 15" ><path d="M2.4 8 V5 Q2.4 1.2 6 1.2 Q9.6 1.2 9.6 5 V8" fill="none" stroke="#48a6dc" stroke-width="2.3"/><rect x=".6" y="7" width="10.8" height="7.6" rx=".8" fill="#f3b555" stroke="#d8923a" stroke-width=".9"/><rect x="1.6" y="8" width="8.8" height="2" fill="#fbd48e"/><rect x="5.4" y="9.6" width="1.3" height="2.8" fill="#6a4a20"/></svg><svg style="left:429px;top:370px" width="16" height="10" viewBox="0 0 16 10" ><path d="M0 5 Q3.6 -0.4 8.4 .6 Q13 1.4 16 5.6 Q12.5 9.6 8 9.4 Q3.4 9.2 0 5 Z" fill="#141414"/><path d="M2.6 5.2 Q5 2.4 8.4 2.6 Q11.4 2.8 13.6 5.6 Q11 8 8 7.8 Q4.8 7.6 2.6 5.2 Z" fill="#d9d6c8"/><circle cx="8" cy="5" r="2.6" fill="#141414"/><circle cx="7.2" cy="4.2" r=".8" fill="#bbb"/></svg><div class="a sep" style="left:452px;top:365px;height:18px"></div><svg style="left:461px;top:367px" width="16" height="15" viewBox="0 0 16 15" ><circle cx="8.6" cy="2.2" r="1.9" fill="#141414"/><rect x="7.8" y="3.4" width="1.7" height="5" fill="#141414"/><path d="M6 7.6 L11 7.6 L13.5 10.5 L15.4 11 V15 H.6 V10.8 L3.4 9.8 Z" fill="#141414"/><path d="M3 11.6 L6 11 L6.4 12 L3.4 12.6 Z" fill="#e8e8e8"/><circle cx="11.6" cy="12" r=".8" fill="#ddd"/></svg><div class="a" style="left:480px;top:364px;width:23px;height:21px;box-sizing:border-box;border:1px solid #a9b7d2;border-radius:3px;background:linear-gradient(180deg,#fff,#f6f8fc)"></div><svg style="left:484px;top:367px" width="16" height="15" viewBox="0 0 16 15" ><defs><radialGradient id="gl10" cx=".5" cy=".55" r=".6"><stop offset="0" stop-color="#ff6a74"/><stop offset=".75" stop-color="#f99aa0"/><stop offset="1" stop-color="#f4b8b8" stop-opacity=".3"/></radialGradient></defs><path d="M0 15 V8 Q2 1 8 .6 Q14 1 16 8 V15 Z" fill="url(#gl10)"/><circle cx="8.6" cy="2.2" r="1.9" fill="#7a0c14"/><rect x="7.8" y="3.4" width="1.7" height="5" fill="#7a0c14"/><path d="M6 7.6 L11 7.6 L13.5 10.5 L15.4 11 V15 H.6 V10.8 L3.4 9.8 Z" fill="#7a0c14"/><path d="M3 11.6 L6 11 L6.4 12 L3.4 12.6 Z" fill="#e8e8e8"/><circle cx="11.6" cy="12" r=".8" fill="#ffb0b0"/></svg><svg style="left:505.6px;top:367.5px" width="14" height="16" viewBox="0 0 14 16"  class="tx"><rect x="0" y="8" width="1.6" height="6" fill="#c8141c"/><text x="3.6" y="14.4" font-family="Liberation Sans,sans-serif" font-size="16.5" fill="#000" textLength="9.2" lengthAdjust="spacingAndGlyphs" stroke="#000" stroke-width=".45">S</text></svg><div class="a sep" style="left:529px;top:365px;height:18px"></div><svg style="left:538px;top:368px" width="14.5" height="14" viewBox="0 0 14.5 14" ><rect x=".75" y=".75" width="13" height="12.5" fill="#eceade" stroke="#000" stroke-width="1.5"/><rect x="1.5" y="10.6" width="11.5" height="2" fill="#3f7ee6"/></svg><div class="a sep" style="left:560.5px;top:365px;height:18px"></div><svg style="left:570px;top:366.6px" width="14" height="15.5" viewBox="0 0 14 15.5" ><defs><linearGradient id="st11" x1="0" y1="0" x2="1" y2="1"><stop offset="0" stop-color="#000"/><stop offset=".55" stop-color="#1a1a1a"/><stop offset="1" stop-color="#5a5a5a"/></linearGradient></defs><circle cx="6.6" cy="2.4" r="2.4" fill="#6c6c68"/><circle cx="6.6" cy="2" r="1" fill="#9a9a96"/><path d="M0 15 L2.2 10 H13 V15 Z" fill="#55554f"/><rect x="3.4" y="4" width="9.4" height="8.6" fill="url(#st11)" stroke="#fff" stroke-width="1"/><path d="M12.8 4 V12.6 H3.4" fill="none" stroke="#222" stroke-width="1"/></svg><div class="a sep" style="left:591.5px;top:365px;height:18px"></div><svg style="left:600px;top:368px" width="15" height="14" viewBox="0 0 15 14" ><rect x="6.6" y=".8" width="7.6" height="6.6" fill="#f0efe6" stroke="#000" stroke-width="1.2"/><rect x="6.6" y=".4" width="7.6" height="2" fill="#000"/><rect x=".7" y="6.8" width="7.6" height="6.4" fill="#e6e4d8" stroke="#55554f" stroke-width="1.2"/><path d="M3.6 11 L9.4 5.2" stroke="#000" stroke-width="1.8"/><path d="M5.6 3.6 H11 V9 Z" fill="#000"/></svg><svg style="left:624.2px;top:369.2px" width="12" height="12.4" viewBox="0 0 12 12.4" ><rect x=".9" y=".9" width="10" height="10.4" fill="#f1f0ea" stroke="#000" stroke-width="1.7"/><rect x=".1" y="0" width="11.6" height="3.2" fill="#000"/></svg>
<div class="a tri-d" style="left:1306px;top:372px"></div><div class="a sep" style="left:1325.5px;top:365px;height:18px"></div><svg style="left:1335px;top:366.5px" width="15" height="15" viewBox="0 0 15 15" ><circle cx="7.2" cy="3" r="2.5" fill="#4a4a46"/><circle cx="6.6" cy="2.3" r=".9" fill="#8c8c88"/><rect x="6.2" y="5" width="1.9" height="6" fill="#4a4a46"/><rect x="2.8" y="9.8" width="8.7" height="2.2" fill="#5a5a56"/><rect x=".2" y="11.4" width="14.2" height="3.2" fill="#4a4a46"/><rect x="4.2" y="13.7" width="6.2" height="1" fill="#9a9890"/></svg><div class="a sep" style="left:1356.8px;top:365px;height:18px"></div><div class="a" style="left:1362.1px;top:364px;width:22.6px;height:20.4px;box-sizing:border-box;border:1px solid #a9b7d2;border-radius:3px;background:linear-gradient(180deg,#fff,#f6f8fc)"></div><svg style="left:1365.9px;top:367px" width="15.5" height="15" viewBox="0 0 16 16"  preserveAspectRatio="none"><polygon points="8,1 15,4.2 15,11.5 8,15.2 1,11.5 1,4.2" fill="none" stroke="#3a3a3a" stroke-width="1.3" stroke-linejoin="round"/><path d="M1 4.2 L8 7.6 L15 4.2 M8 7.6 L8 15.2" stroke="#3a3a3a" stroke-width="1.3" fill="none"/></svg><svg style="left:1388.9px;top:367px" width="15.5" height="15" viewBox="0 0 16 16"  preserveAspectRatio="none"><path d="M8 1 V8.6 M8 8.6 L1 11.5 M8 8.6 L15 11.5" stroke="#8a8a86" stroke-width="1" fill="none"/><polygon points="8,1 15,4.2 15,11.5 8,15.2 1,11.5 1,4.2" fill="none" stroke="#444440" stroke-width="1.2" stroke-linejoin="round"/><path d="M1 4.2 L8 7.6 L15 4.2 M8 7.6 L8 15.2" stroke="#444440" stroke-width="1.2" fill="none"/></svg><svg style="left:1411.9px;top:367px" width="15.5" height="15" viewBox="0 0 16 16"  preserveAspectRatio="none"><defs><linearGradient id="cu12" x1="0" y1="0" x2="1" y2="1"><stop offset="0" stop-color="#8fe4e4"/><stop offset=".5" stop-color="#c4f6f6"/><stop offset="1" stop-color="#f4ffff"/></linearGradient></defs><path d="M7 .9 L14.4 3.4 Q15 3.8 14.9 4.8 L14.2 10 L9.6 15.2 L6.6 15.2 L2.8 12.8 Q1.2 10 .8 5.6 Q.8 4.6 1.8 4 Z" fill="url(#cu12)"/><path d="M9.8 15 L14.2 10 L14.9 4.8 Q15 3.8 14.4 3.4 L7 .9 L1.8 4 Q.8 4.6 .8 5.6 Q1.2 10 2.8 12.8 L6.4 15.2" fill="none" stroke="#2a7272" stroke-width="1.35" stroke-linejoin="round"/></svg><svg style="left:1434.9px;top:367px" width="15.5" height="15" viewBox="0 0 16 16"  preserveAspectRatio="none"><path d="M-.8 12.4 L2.6 15.8 H9.6 L9.4 13 L2.2 11 Z" fill="#66665e" opacity=".8"/><polygon points="7.2,0.8 14.9,3 9.4,8.8 0.9,5.8" fill="#a6eeee"/><polygon points="0.9,5.8 9.4,8.8 9.4,15.4 2.2,12.6" fill="#54b0b0"/><polygon points="9.4,8.8 14.9,3 14.4,10.4 9.4,15.4" fill="#a2eaea"/><polygon points="7.2,0.8 14.9,3 14.4,10.4 9.4,15.4 2.2,12.6 0.9,5.8" fill="none" stroke="#1d5c5c" stroke-width="1.15" stroke-linejoin="round"/><path d="M0.9 5.8 L9.4 8.8 L14.9 3 M9.4 8.8 L9.4 15.4" stroke="#1d5c5c" stroke-width="1.15" fill="none"/></svg><svg style="left:1457.9px;top:367px" width="15.5" height="15" viewBox="0 0 16 16"  preserveAspectRatio="none"><path d="M-.8 12.4 L2.6 15.8 H9.6 L9.4 13 L2.2 11 Z" fill="#66665e" opacity=".8"/><polygon points="7.2,0.8 14.9,3 9.4,8.8 0.9,5.8" fill="#9be6e6"/><polygon points="0.9,5.8 9.4,8.8 9.4,15.4 2.2,12.6" fill="#3f9494"/><polygon points="9.4,8.8 14.9,3 14.4,10.4 9.4,15.4" fill="#b2f2f2"/><polygon points="7.2,0.8 14.9,3 14.4,10.4 9.4,15.4 2.2,12.6 0.9,5.8" fill="none" stroke="#236464" stroke-width="1.1" stroke-linejoin="round"/></svg><svg style="left:1480.9px;top:367px" width="15.5" height="15" viewBox="0 0 16 16"  preserveAspectRatio="none"><path d="M7 .6 L15.6 4.8 V13.6 L7 9 Z" fill="#2c7c7c" stroke="#1c5454" stroke-width=".8"/><path d="M3.8 1 L12.6 5.2 V14.2 L3.8 9.4 Z" fill="#469c9c" stroke="#1c5454" stroke-width=".8"/><path d="M.5 1.4 L9.2 5.6 V14.8 L.5 10 Z" fill="#cdf4f4" stroke="#236a6a" stroke-width="1"/></svg><svg style="left:1503.9px;top:367px" width="15.5" height="15" viewBox="0 0 16 16"  preserveAspectRatio="none"><path d="M-.8 12.4 L2.6 15.8 H9.6 L9.4 13 L2.2 11 Z" fill="#66665e" opacity=".8"/><polygon points="7.2,0.8 14.9,3 9.4,8.8 0.9,5.8" fill="#dcc8c8"/><polygon points="0.9,5.8 9.4,8.8 9.4,15.4 2.2,12.6" fill="#a08080"/><polygon points="9.4,8.8 14.9,3 14.4,10.4 9.4,15.4" fill="#e6d6da"/><polygon points="7.2,0.8 14.9,3 14.4,10.4 9.4,15.4 2.2,12.6 0.9,5.8" fill="none" stroke="#5a4444" stroke-width="1.1" stroke-linejoin="round"/></svg><svg style="left:1526.9px;top:367px" width="15.5" height="15" viewBox="0 0 16 16"  preserveAspectRatio="none" class="tx"><path d="M5 3 L10 1 L14.5 3 V11 L10 13.5 L5 11.5 Z" fill="#8c8c8c"/><path d="M2 5 L7 3.4 L11 5.2 V12.4 L6.4 14.6 L2 12.6 Z" fill="#6c6c6c"/><path d="M9 4 L12 3 L14 4.5 V9 L11 10 Z" fill="#a2a2a2"/><text x="3.2" y="12" font-family="Liberation Sans,sans-serif" font-weight="bold" font-size="8.5" fill="#111">S</text></svg><svg style="left:1549.9px;top:367px" width="17" height="17" viewBox="0 0 17 17" ><rect x="0" y="0" width="17" height="17" fill="#c9c6c2" opacity=".55"/><g transform="translate(.5,.5)"><path d="M-.8 12.4 L2.6 15.8 H9.6 L9.4 13 L2.2 11 Z" fill="#66665e" opacity=".8"/><polygon points="7.2,0.8 14.9,3 9.4,8.8 0.9,5.8" fill="#e2ccf8"/><polygon points="0.9,5.8 9.4,8.8 9.4,15.4 2.2,12.6" fill="#a07cc8"/><polygon points="9.4,8.8 14.9,3 14.4,10.4 9.4,15.4" fill="#dcc2f6"/><polygon points="7.2,0.8 14.9,3 14.4,10.4 9.4,15.4 2.2,12.6 0.9,5.8" fill="none" stroke="#866ca6" stroke-width="0.8" stroke-linejoin="round"/></g></svg><svg style="left:1572.9px;top:367px" width="15.5" height="15" viewBox="0 0 16 16"  preserveAspectRatio="none"><path d="M0 12.5 L5 15.8 H13 L15.5 13 V11 Z" fill="#6e6e66" opacity=".75"/><polygon points="8,1 15,4.2 8,7.6 1,4.2" fill="#8cd0d0"/><polygon points="1,4.2 8,7.6 8,15.2 1,11.5" fill="#3c8484"/><polygon points="8,7.6 15,4.2 15,11.5 8,15.2" fill="#70bcbc"/><polygon points="8,1 15,4.2 15,11.5 8,15.2 1,11.5 1,4.2" fill="none" stroke="#1c4c4c" stroke-width="1" stroke-linejoin="round"/><path d="M1 4.2 L8 7.6 L15 4.2 M8 7.6 L8 15.2" stroke="#1c4c4c" stroke-width="1" fill="none"/><path d="M4.5 2.6 L11.5 5.9 M11.5 2.6 L4.5 5.9 M1 7.8 L8 11.4 L15 7.8 M4.5 5.9 V13.4 M11.5 5.9 V13.4" stroke="#d4f4f4" stroke-width=".9" fill="none"/></svg><div class="a sep" style="left:1595.5px;top:365px;height:18px"></div><svg style="left:1603px;top:367px" width="16" height="15" viewBox="0 0 16 15"  class="tx"><rect x="0" y="0" width="16" height="15" fill="#d6d5cf"/><text x="8" y="13.6" text-anchor="middle" font-family="Liberation Sans,sans-serif" font-weight="bold" font-size="16.5" fill="#000" textLength="9.2" lengthAdjust="spacingAndGlyphs" stroke="#000" stroke-width="1" stroke-linejoin="round">G</text></svg><div class="a sep" style="left:1626px;top:365px;height:18px"></div><svg style="left:1636px;top:367px" width="12" height="15" viewBox="0 0 12 15" ><path d="M2.4 8 V5 Q2.4 1.2 6 1.2 Q9.6 1.2 9.6 5 V8" fill="none" stroke="#48a6dc" stroke-width="2.3"/><rect x=".6" y="7" width="10.8" height="7.6" rx=".8" fill="#f3b555" stroke="#d8923a" stroke-width=".9"/><rect x="1.6" y="8" width="8.8" height="2" fill="#fbd48e"/><rect x="5.4" y="9.6" width="1.3" height="2.8" fill="#6a4a20"/></svg><svg style="left:1657px;top:370px" width="16" height="10" viewBox="0 0 16 10" ><path d="M0 5 Q3.6 -0.4 8.4 .6 Q13 1.4 16 5.6 Q12.5 9.6 8 9.4 Q3.4 9.2 0 5 Z" fill="#141414"/><path d="M2.6 5.2 Q5 2.4 8.4 2.6 Q11.4 2.8 13.6 5.6 Q11 8 8 7.8 Q4.8 7.6 2.6 5.2 Z" fill="#d9d6c8"/><circle cx="8" cy="5" r="2.6" fill="#141414"/><circle cx="7.2" cy="4.2" r=".8" fill="#bbb"/></svg><div class="a sep" style="left:1680px;top:365px;height:18px"></div><svg style="left:1689px;top:367px" width="16" height="15" viewBox="0 0 16 15" ><circle cx="8.6" cy="2.2" r="1.9" fill="#141414"/><rect x="7.8" y="3.4" width="1.7" height="5" fill="#141414"/><path d="M6 7.6 L11 7.6 L13.5 10.5 L15.4 11 V15 H.6 V10.8 L3.4 9.8 Z" fill="#141414"/><path d="M3 11.6 L6 11 L6.4 12 L3.4 12.6 Z" fill="#e8e8e8"/><circle cx="11.6" cy="12" r=".8" fill="#ddd"/></svg><svg style="left:1712px;top:367px" width="16" height="15" viewBox="0 0 16 15" ><defs><radialGradient id="gl13" cx=".5" cy=".55" r=".6"><stop offset="0" stop-color="#ff6a74"/><stop offset=".75" stop-color="#f99aa0"/><stop offset="1" stop-color="#f4b8b8" stop-opacity=".3"/></radialGradient></defs><path d="M0 15 V8 Q2 1 8 .6 Q14 1 16 8 V15 Z" fill="url(#gl13)"/><circle cx="8.6" cy="2.2" r="1.9" fill="#7a0c14"/><rect x="7.8" y="3.4" width="1.7" height="5" fill="#7a0c14"/><path d="M6 7.6 L11 7.6 L13.5 10.5 L15.4 11 V15 H.6 V10.8 L3.4 9.8 Z" fill="#7a0c14"/><path d="M3 11.6 L6 11 L6.4 12 L3.4 12.6 Z" fill="#e8e8e8"/><circle cx="11.6" cy="12" r=".8" fill="#ffb0b0"/></svg><svg style="left:1733.6px;top:367.5px" width="14" height="16" viewBox="0 0 14 16"  class="tx"><rect x="0" y="8" width="1.6" height="6" fill="#c8141c"/><text x="3.6" y="14.4" font-family="Liberation Sans,sans-serif" font-size="16.5" fill="#000" textLength="9.2" lengthAdjust="spacingAndGlyphs" stroke="#000" stroke-width=".45">S</text></svg><div class="a sep" style="left:1757px;top:365px;height:18px"></div><svg style="left:1766px;top:368px" width="14.5" height="14" viewBox="0 0 14.5 14" ><rect x=".75" y=".75" width="13" height="12.5" fill="#eceade" stroke="#000" stroke-width="1.5"/><rect x="1.5" y="10.6" width="11.5" height="2" fill="#3f7ee6"/></svg><div class="a sep" style="left:1788.5px;top:365px;height:18px"></div><svg style="left:1798px;top:366.6px" width="14" height="15.5" viewBox="0 0 14 15.5" ><defs><linearGradient id="st14" x1="0" y1="0" x2="1" y2="1"><stop offset="0" stop-color="#000"/><stop offset=".55" stop-color="#1a1a1a"/><stop offset="1" stop-color="#5a5a5a"/></linearGradient></defs><circle cx="6.6" cy="2.4" r="2.4" fill="#6c6c68"/><circle cx="6.6" cy="2" r="1" fill="#9a9a96"/><path d="M0 15 L2.2 10 H13 V15 Z" fill="#55554f"/><rect x="3.4" y="4" width="9.4" height="8.6" fill="url(#st14)" stroke="#fff" stroke-width="1"/><path d="M12.8 4 V12.6 H3.4" fill="none" stroke="#222" stroke-width="1"/></svg><div class="a sep" style="left:1819.5px;top:365px;height:18px"></div><svg style="left:1828px;top:368px" width="15" height="14" viewBox="0 0 15 14" ><rect x="6.6" y=".8" width="7.6" height="6.6" fill="#f0efe6" stroke="#000" stroke-width="1.2"/><rect x="6.6" y=".4" width="7.6" height="2" fill="#000"/><rect x=".7" y="6.8" width="7.6" height="6.4" fill="#e6e4d8" stroke="#55554f" stroke-width="1.2"/><path d="M3.6 11 L9.4 5.2" stroke="#000" stroke-width="1.8"/><path d="M5.6 3.6 H11 V9 Z" fill="#000"/></svg><svg style="left:1852.2px;top:369.2px" width="12" height="12.4" viewBox="0 0 12 12.4" ><rect x=".9" y=".9" width="10" height="10.4" fill="#f1f0ea" stroke="#000" stroke-width="1.7"/><rect x=".1" y="0" width="11.6" height="3.2" fill="#000"/></svg>
<div class="a vp" style="left:73px;top:88px;width:1222px;height:269px">
<svg class="a" style="left:0;top:0" width="1216" height="263" viewBox="0 0 1216 263" shape-rendering="crispEdges"><g transform="translate(.5,.5)" fill="none" stroke-width="1"><path d="M21 -1V264M50 -1V264M79 -1V264M109 -1V264M167 -1V264M197 -1V264M226 -1V264M256 -1V264M285 -1V264M314 -1V264M344 -1V264M402 -1V264M432 -1V264M461 -1V264M491 -1V264M520 -1V264M549 -1V264M579 -1V264M637 -1V264M667 -1V264M696 -1V264M726 -1V264M755 -1V264M784 -1V264M814 -1V264M872 -1V264M902 -1V264M931 -1V264M961 -1V264M990 -1V264M1019 -1V264M1049 -1V264M1107 -1V264M1137 -1V264M1166 -1V264M1196 -1V264M-1 14H1217M-1 43H1217M-1 73H1217M-1 102H1217M-1 160H1217M-1 190H1217M-1 219H1217M-1 248H1217" stroke="#949494"/><path d="M138 -1V264M373 -1V264M608 -1V264M843 -1V264M1078 -1V264M-1 131H1217" stroke="#7f7f7f"/><path d="M373 -1V264" stroke="#8a1414"/><path d="M843 -1V264" stroke="#8a1414"/></g><g shape-rendering="auto"><g transform="translate(557,84)"><rect x="0" y="0" width="103" height="99" rx="2" fill="#000"/><defs><filter id="mf15" x="-5%" y="-5%" width="110%" height="110%"><feGaussianBlur stdDeviation="1.66667"/></filter><clipPath id="mc16"><rect x="0" y="0" width="100" height="100"/></clipPath><linearGradient id="mf15sk" x1="0" y1="0" x2="0" y2="1"><stop offset="0" stop-color="#76828a"/><stop offset="1" stop-color="#8a959b"/></linearGradient></defs><g transform="translate(6,6) scale(0.91,0.87)" clip-path="url(#mc16)"><rect x="0" y="0" width="100" height="100" fill="url(#mf15sk)"/><g filter="url(#mf15)"><path d="M-3 60 L5 54 L12 47 L18 40 L24 33 L29 29 L34 31 L39 38 L44 33 L49 22 L54 12 L60 7 L66 9 L71 18 L76 28 L82 33 L90 40 L103 50 L103 86 L94 90 L80 92 L62 91 L40 93 L22 90 L6 85 L-3 80 Z" fill="#3d3c42"/><path d="M8 78 L20 64 L30 58 L40 62 L52 50 L62 52 L72 62 L84 66 L96 76 L100 86 L80 92 L60 90 L40 93 L20 90 Z" fill="#6c6e72" opacity=".75"/><path d="M55 36 L48 55 L38 72 L24 88 L36 90 L50 72 L58 54 L61 38 Z" fill="#8b9398" opacity=".8"/><path d="M27 42 L19 57 L8 74 L5 83 L15 81 L25 63 L33 46 Z" fill="#74787e" opacity=".7"/><path d="M66 38 L74 57 L86 80 L76 88 L66 67 L62 46 Z" fill="#7a7d82" opacity=".8"/><path d="M80 38 L90 52 L99 70 L99 84 L89 67 L79 48 Z" fill="#2c2b30" opacity=".8"/><path d="M42 42 L38 58 L32 70 L41 66 L47 48 Z" fill="#29282d" opacity=".85"/><path d="M58 58 L56 74 L50 88 L60 86 L64 70 Z" fill="#2f2e34" opacity=".75"/><path d="M14 58 L12 72 L20 84 L26 76 L20 64 Z" fill="#2f2e34" opacity=".6"/><path d="M48 26 L52 15 L57 8 L62 5 L67 8 L70 17 L72 28 L67 35 L63 28 L59 38 L54 32 L50 36 Z" fill="#e2f4f4"/><path d="M23 37 L27 30 L32 27 L37 31 L38 37 L33 41 L28 38 L25 42 Z" fill="#e6f5f5"/><path d="M60 14 L64 10 L67 16 L66 26 L62 22 Z" fill="#b8d0d4" opacity=".8"/><path d="M40 72 L44 64 L48 66 L44 76 Z" fill="#c7d4d6" opacity=".7"/></g></g></g><line x1="657" y1="84" x2="740" y2="0" stroke="#858585" stroke-width="1"/></g></svg>
</div>
<div class="a vp" style="left:1301px;top:88px;width:618px;height:269px">
<svg class="a" style="left:0;top:0" width="612" height="263" viewBox="0 0 612 263" shape-rendering="crispEdges"><g transform="translate(.5,.5)" fill="none" stroke-width="1"><path d="M9 -1V264M24 -1V264M39 -1V264M54 -1V264M83 -1V264M98 -1V264M113 -1V264M128 -1V264M143 -1V264M158 -1V264M172 -1V264M202 -1V264M217 -1V264M232 -1V264M247 -1V264M261 -1V264M276 -1V264M291 -1V264M321 -1V264M336 -1V264M351 -1V264M365 -1V264M380 -1V264M395 -1V264M410 -1V264M440 -1V264M455 -1V264M469 -1V264M484 -1V264M499 -1V264M514 -1V264M529 -1V264M558 -1V264M573 -1V264M588 -1V264M603 -1V264M-1 28H613M-1 42H613M-1 57H613M-1 72H613M-1 87H613M-1 102H613M-1 117H613M-1 146H613M-1 161H613M-1 176H613M-1 191H613M-1 206H613M-1 220H613M-1 235H613" stroke="#949494"/><path d="M68 -1V264M187 -1V264M306 -1V264M425 -1V264M544 -1V264M-1 13H613M-1 131H613M-1 250H613" stroke="#7f7f7f"/><rect x="187" y="13" width="238" height="237" stroke="#8a1414"/></g><g shape-rendering="auto"><g transform="translate(281,108)"><rect x="0" y="0" width="51" height="50" rx="0" fill="#000"/><defs><filter id="mf17" x="-5%" y="-5%" width="110%" height="110%"><feGaussianBlur stdDeviation="1.66667"/></filter><clipPath id="mc18"><rect x="0" y="0" width="100" height="100"/></clipPath><linearGradient id="mf17sk" x1="0" y1="0" x2="0" y2="1"><stop offset="0" stop-color="#76828a"/><stop offset="1" stop-color="#8a959b"/></linearGradient></defs><g transform="translate(3,3) scale(0.45,0.44)" clip-path="url(#mc18)"><rect x="0" y="0" width="100" height="100" fill="url(#mf17sk)"/><g filter="url(#mf17)"><path d="M-3 60 L5 54 L12 47 L18 40 L24 33 L29 29 L34 31 L39 38 L44 33 L49 22 L54 12 L60 7 L66 9 L71 18 L76 28 L82 33 L90 40 L103 50 L103 86 L94 90 L80 92 L62 91 L40 93 L22 90 L6 85 L-3 80 Z" fill="#3d3c42"/><path d="M8 78 L20 64 L30 58 L40 62 L52 50 L62 52 L72 62 L84 66 L96 76 L100 86 L80 92 L60 90 L40 93 L20 90 Z" fill="#6c6e72" opacity=".75"/><path d="M55 36 L48 55 L38 72 L24 88 L36 90 L50 72 L58 54 L61 38 Z" fill="#8b9398" opacity=".8"/><path d="M27 42 L19 57 L8 74 L5 83 L15 81 L25 63 L33 46 Z" fill="#74787e" opacity=".7"/><path d="M66 38 L74 57 L86 80 L76 88 L66 67 L62 46 Z" fill="#7a7d82" opacity=".8"/><path d="M80 38 L90 52 L99 70 L99 84 L89 67 L79 48 Z" fill="#2c2b30" opacity=".8"/><path d="M42 42 L38 58 L32 70 L41 66 L47 48 Z" fill="#29282d" opacity=".85"/><path d="M58 58 L56 74 L50 88 L60 86 L64 70 Z" fill="#2f2e34" opacity=".75"/><path d="M14 58 L12 72 L20 84 L26 76 L20 64 Z" fill="#2f2e34" opacity=".6"/><path d="M48 26 L52 15 L57 8 L62 5 L67 8 L70 17 L72 28 L67 35 L63 28 L59 38 L54 32 L50 36 Z" fill="#e2f4f4"/><path d="M23 37 L27 30 L32 27 L37 31 L38 37 L33 41 L28 38 L25 42 Z" fill="#e6f5f5"/><path d="M60 14 L64 10 L67 16 L66 26 L62 22 Z" fill="#b8d0d4" opacity=".8"/><path d="M40 72 L44 64 L48 66 L44 76 Z" fill="#c7d4d6" opacity=".7"/></g></g></g><line x1="306.5" y1="131.5" x2="332" y2="131.5" stroke="#a9a59c" stroke-width="1"/></g></svg>
</div>
<div class="a vp" style="left:1301px;top:385px;width:618px;height:670px">
<svg class="a" style="left:0;top:0" width="612" height="664" viewBox="0 0 612 664" shape-rendering="crispEdges"><g transform="translate(.5,.5)" fill="none" stroke-width="1"><path d="M9 -1V665M24 -1V665M39 -1V665M54 -1V665M83 -1V665M98 -1V665M113 -1V665M128 -1V665M143 -1V665M158 -1V665M172 -1V665M202 -1V665M217 -1V665M232 -1V665M247 -1V665M261 -1V665M276 -1V665M291 -1V665M321 -1V665M336 -1V665M351 -1V665M365 -1V665M380 -1V665M395 -1V665M410 -1V665M440 -1V665M455 -1V665M469 -1V665M484 -1V665M499 -1V665M514 -1V665M529 -1V665M558 -1V665M573 -1V665M588 -1V665M603 -1V665M-1 6H613M-1 21H613M-1 36H613M-1 50H613M-1 65H613M-1 80H613M-1 110H613M-1 125H613M-1 139H613M-1 154H613M-1 169H613M-1 184H613M-1 199H613M-1 228H613M-1 243H613M-1 258H613M-1 273H613M-1 288H613M-1 302H613M-1 317H613M-1 347H613M-1 362H613M-1 376H613M-1 391H613M-1 406H613M-1 421H613M-1 436H613M-1 465H613M-1 480H613M-1 495H613M-1 510H613M-1 525H613M-1 539H613M-1 554H613M-1 584H613M-1 599H613M-1 614H613M-1 628H613M-1 643H613M-1 658H613" stroke="#949494"/><path d="M68 -1V665M187 -1V665M306 -1V665M425 -1V665M544 -1V665M-1 95H613M-1 213H613M-1 332H613M-1 451H613M-1 569H613" stroke="#7f7f7f"/><rect x="187" y="213" width="238" height="237" stroke="#8a1414"/></g><g shape-rendering="auto"><g transform="translate(281,308)"><rect x="0" y="0" width="51" height="50" rx="0" fill="#000"/><defs><filter id="mf19" x="-5%" y="-5%" width="110%" height="110%"><feGaussianBlur stdDeviation="1.66667"/></filter><clipPath id="mc20"><rect x="0" y="0" width="100" height="100"/></clipPath><linearGradient id="mf19sk" x1="0" y1="0" x2="0" y2="1"><stop offset="0" stop-color="#76828a"/><stop offset="1" stop-color="#8a959b"/></linearGradient></defs><g transform="translate(3,3) scale(0.45,0.44)" clip-path="url(#mc20)"><rect x="0" y="0" width="100" height="100" fill="url(#mf19sk)"/><g filter="url(#mf19)"><path d="M-3 60 L5 54 L12 47 L18 40 L24 33 L29 29 L34 31 L39 38 L44 33 L49 22 L54 12 L60 7 L66 9 L71 18 L76 28 L82 33 L90 40 L103 50 L103 86 L94 90 L80 92 L62 91 L40 93 L22 90 L6 85 L-3 80 Z" fill="#3d3c42"/><path d="M8 78 L20 64 L30 58 L40 62 L52 50 L62 52 L72 62 L84 66 L96 76 L100 86 L80 92 L60 90 L40 93 L20 90 Z" fill="#6c6e72" opacity=".75"/><path d="M55 36 L48 55 L38 72 L24 88 L36 90 L50 72 L58 54 L61 38 Z" fill="#8b9398" opacity=".8"/><path d="M27 42 L19 57 L8 74 L5 83 L15 81 L25 63 L33 46 Z" fill="#74787e" opacity=".7"/><path d="M66 38 L74 57 L86 80 L76 88 L66 67 L62 46 Z" fill="#7a7d82" opacity=".8"/><path d="M80 38 L90 52 L99 70 L99 84 L89 67 L79 48 Z" fill="#2c2b30" opacity=".8"/><path d="M42 42 L38 58 L32 70 L41 66 L47 48 Z" fill="#29282d" opacity=".85"/><path d="M58 58 L56 74 L50 88 L60 86 L64 70 Z" fill="#2f2e34" opacity=".75"/><path d="M14 58 L12 72 L20 84 L26 76 L20 64 Z" fill="#2f2e34" opacity=".6"/><path d="M48 26 L52 15 L57 8 L62 5 L67 8 L70 17 L72 28 L67 35 L63 28 L59 38 L54 32 L50 36 Z" fill="#e2f4f4"/><path d="M23 37 L27 30 L32 27 L37 31 L38 37 L33 41 L28 38 L25 42 Z" fill="#e6f5f5"/><path d="M60 14 L64 10 L67 16 L66 26 L62 22 Z" fill="#b8d0d4" opacity=".8"/><path d="M40 72 L44 64 L48 66 L44 76 Z" fill="#c7d4d6" opacity=".7"/></g></g></g></g></svg>
</div>
<div class="a" style="left:73px;top:385px;width:1222px;height:670px;box-sizing:border-box;border:3px solid #ffff21;background:#040404;box-shadow:0 0 0 1px rgba(250,248,90,.3)"><div class="a" style="left:0;top:0;width:1216px;height:664px;overflow:hidden">
<svg class="a" style="left:0;top:0" width="1216" height="664" viewBox="0 0 1216 664"><defs><linearGradient id="hz" x1="0" y1="0" x2="0" y2="1"><stop offset="0" stop-color="#04042c"/><stop offset=".06" stop-color="#050544"/><stop offset=".34" stop-color="#050542"/><stop offset=".46" stop-color="#050534"/><stop offset=".62" stop-color="#04041c"/><stop offset="1" stop-color="#040406"/></linearGradient><linearGradient id="lsh" gradientUnits="userSpaceOnUse" x1="129" y1="412" x2="239" y2="394.5"><stop offset="0" stop-color="#000" stop-opacity=".34"/><stop offset=".45" stop-color="#000" stop-opacity=".12"/><stop offset="1" stop-color="#000" stop-opacity="0"/></linearGradient><linearGradient id="bsh" gradientUnits="userSpaceOnUse" x1="624" y1="435" x2="618.4" y2="416"><stop offset="0" stop-color="#000" stop-opacity=".40"/><stop offset=".5" stop-color="#000" stop-opacity=".12"/><stop offset="1" stop-color="#000" stop-opacity="0"/></linearGradient><linearGradient id="gsh" gradientUnits="userSpaceOnUse" x1="101" y1="0" x2="122" y2="0"><stop offset="0" stop-color="#c4c4c6"/><stop offset="1" stop-color="#8d8c8f"/></linearGradient></defs><rect x="0" y="216" width="1216" height="38" fill="url(#hz)"/><line x1="0" y1="233" x2="110" y2="232.5" stroke="#0b0b52" stroke-opacity="0.8" stroke-width="1"/><line x1="0" y1="238" x2="110" y2="237" stroke="#0b0b52" stroke-opacity="0.76" stroke-width="1"/><line x1="0" y1="244" x2="110" y2="242.5" stroke="#0b0b52" stroke-opacity="0.72" stroke-width="1"/><line x1="0" y1="251" x2="110" y2="249" stroke="#0b0b52" stroke-opacity="0.68" stroke-width="1"/><line x1="0" y1="258.7" x2="104.159" y2="257" stroke="#0b0b52" stroke-opacity="0.64" stroke-width="1"/><line x1="0" y1="272" x2="106.014" y2="268.7" stroke="#0b0b52" stroke-opacity="0.6" stroke-width="1"/><line x1="0" y1="297.8" x2="109.71" y2="292" stroke="#0b0b52" stroke-opacity="0.56" stroke-width="1"/><line x1="0" y1="352.8" x2="117.37" y2="340.3" stroke="#0b0b52" stroke-opacity="0.52" stroke-width="1"/><line x1="101" y1="218" x2="101.4" y2="235" stroke="#0a0a50" stroke-width="1"/><line x1="1216" y1="417" x2="824" y2="357" stroke="#0b0b3c" stroke-width="1"/><line x1="1216" y1="312" x2="1074" y2="302" stroke="#0b0b3c" stroke-width="1"/><line x1="1216" y1="280" x2="1104" y2="276" stroke="#0b0b3c" stroke-width="1"/><line x1="670" y1="0" x2="668" y2="216" stroke="#08082c" stroke-width="1"/><polyline points="665,424 661,606 560,664" fill="none" stroke="#09092a" stroke-width="1"/><line x1="661" y1="606" x2="739" y2="664" stroke="#09092a" stroke-width="1"/><defs><clipPath id="slabc"><polygon points="102,234 467,229 624,225.5 804,229 1216,238 1216,258 155,577 104.3,256"/></clipPath></defs><g clip-path="url(#slabc)"><polygon points="102,234 467,229 624,225.5 804,229 1216,238 1216,258 155,577 104.3,256" fill="#5553a9"/><polygon points="124,592 1224,260 1224,212 124,542" fill="url(#bsh)"/></g><polygon points="101.3,235.6 324,232 467,229.6 626,238 324,249.5 104.6,256.6" fill="url(#gsh)"/><polygon points="626,238 804,229.6 1024,234.5 1216,239.5 1216,258.2 1186,264.5" fill="#8d8c8f"/><polyline points="104.6,256.6 324,249.5 626,238 804,229.6" fill="none" stroke="#55556a" stroke-width="1"/><polyline points="467,229.6 626,238 1186,264.5" fill="none" stroke="#55556a" stroke-width="1"/></svg><div class="a" style="left:0;top:0;width:1216px;height:664px;clip-path:polygon(104.3px 256px,626px 238px,1186px 264.5px,1216px 258px,155px 577px);background:conic-gradient(from 0deg at 104.3px 256px,rgba(0,0,0,0) 0deg,rgba(0,0,0,0) 136deg,rgba(0,0,0,.05) 144deg,rgba(0,0,0,.14) 154deg,rgba(0,0,0,.22) 164deg,rgba(0,0,0,.28) 171deg,rgba(0,0,0,.27) 200deg,rgba(0,0,0,0) 201deg)"></div><svg class="a tx" style="left:0;top:0" width="1216" height="664" viewBox="0 0 1216 664"><line x1="0" y1="623" x2="138" y2="581.7" stroke="#1212b4" stroke-width="1"/><line x1="158.4" y1="594" x2="168.6" y2="664" stroke="#1212b4" stroke-width="1"/><g stroke="#a81616" stroke-width="1" fill="none"><line x1="24.6" y1="487.6" x2="232.8" y2="445"/><line x1="232.8" y1="445" x2="263.6" y2="499.9"/><line x1="263.6" y1="499.9" x2="3.1" y2="566"/><line x1="3.1" y1="566" x2="24.6" y2="487.6"/><line x1="24.6" y1="487.6" x2="55.4" y2="645.5"/><line x1="232.8" y1="445" x2="249.1" y2="582.9"/><line x1="263.6" y1="499.9" x2="283.5" y2="668"/><line x1="3.1" y1="566" x2="25.2" y2="668"/><line x1="55.4" y1="645.5" x2="249.1" y2="582.9"/><line x1="249.1" y1="582.9" x2="283.5" y2="668"/><line x1="55.4" y1="645.5" x2="54" y2="668"/></g><g transform="translate(137.7,559.3)"><rect x="0" y="0" width="35.6" height="34.4" rx="1.5" fill="#8c8f90"/><defs><filter id="mf21" x="-5%" y="-5%" width="110%" height="110%"><feGaussianBlur stdDeviation="2.16049"/></filter><clipPath id="mc22"><rect x="0" y="0" width="100" height="100"/></clipPath><linearGradient id="mf21sk" x1="0" y1="0" x2="0" y2="1"><stop offset="0" stop-color="#76828a"/><stop offset="1" stop-color="#8a959b"/></linearGradient></defs><g transform="translate(1.6,1.6) scale(0.324,0.312)" clip-path="url(#mc22)"><rect x="0" y="0" width="100" height="100" fill="url(#mf21sk)"/><g filter="url(#mf21)"><path d="M-3 60 L5 54 L12 47 L18 40 L24 33 L29 29 L34 31 L39 38 L44 33 L49 22 L54 12 L60 7 L66 9 L71 18 L76 28 L82 33 L90 40 L103 50 L103 86 L94 90 L80 92 L62 91 L40 93 L22 90 L6 85 L-3 80 Z" fill="#3d3c42"/><path d="M8 78 L20 64 L30 58 L40 62 L52 50 L62 52 L72 62 L84 66 L96 76 L100 86 L80 92 L60 90 L40 93 L20 90 Z" fill="#6c6e72" opacity=".75"/><path d="M55 36 L48 55 L38 72 L24 88 L36 90 L50 72 L58 54 L61 38 Z" fill="#8b9398" opacity=".8"/><path d="M27 42 L19 57 L8 74 L5 83 L15 81 L25 63 L33 46 Z" fill="#74787e" opacity=".7"/><path d="M66 38 L74 57 L86 80 L76 88 L66 67 L62 46 Z" fill="#7a7d82" opacity=".8"/><path d="M80 38 L90 52 L99 70 L99 84 L89 67 L79 48 Z" fill="#2c2b30" opacity=".8"/><path d="M42 42 L38 58 L32 70 L41 66 L47 48 Z" fill="#29282d" opacity=".85"/><path d="M58 58 L56 74 L50 88 L60 86 L64 70 Z" fill="#2f2e34" opacity=".75"/><path d="M14 58 L12 72 L20 84 L26 76 L20 64 Z" fill="#2f2e34" opacity=".6"/><path d="M48 26 L52 15 L57 8 L62 5 L67 8 L70 17 L72 28 L67 35 L63 28 L59 38 L54 32 L50 36 Z" fill="#e2f4f4"/><path d="M23 37 L27 30 L32 27 L37 31 L38 37 L33 41 L28 38 L25 42 Z" fill="#e6f5f5"/><path d="M60 14 L64 10 L67 16 L66 26 L62 22 Z" fill="#b8d0d4" opacity=".8"/><path d="M40 72 L44 64 L48 66 L44 76 Z" fill="#c7d4d6" opacity=".7"/></g></g></g><g stroke-width="1.2" fill="none"><path d="M26.5 636.5 V613" stroke="#1a1aff"/><path d="M26.5 636.5 L45.5 634.6" stroke="#18e018"/><path d="M26.5 636.5 L16 634.5" stroke="#ff1a1a"/></g><g font-family="Liberation Sans,sans-serif" font-size="11"><text x="30" y="617.5" fill="#2a2aff">Z</text><text x="49" y="638.5" fill="#2be02b">Y</text><text x="14.5" y="638" fill="#ff2020">X</text></g></svg>
</div></div>
<svg style="left:172px;top:374px" width="12" height="19" viewBox="0 0 12 19"><path d="M0.5 0.5 V15 L4 11.8 L6.6 17.8 L9 16.8 L6.4 10.9 H11 Z" fill="#fff" stroke="#000" stroke-width="1"/></svg>
<div class="a bar" style="top:67px"></div><div class="a tri-u" style="left:57px;top:74px"></div><div class="a lbtn" style="left:1px;top:90px;background:repeating-linear-gradient(135deg,#bfe9f3 0 1.1px,#9dd5e5 1.1px 2.4px)"><svg style="left:-1px;top:-1px" width="34" height="34" viewBox="0 0 34 34"><defs><linearGradient id="lp23" x1="0" y1="0" x2="1" y2="1"><stop offset="0" stop-color="#b8f0ea"/><stop offset=".45" stop-color="#72beb6"/><stop offset="1" stop-color="#1c4e4a"/></linearGradient></defs><path d="M4.6 8 H11.4 L13.4 10.4 H22 V13.6 H4.6 Z" fill="#86bcb0" stroke="#16282a" stroke-width="1.5" stroke-linejoin="round"/><rect x="4.6" y="12.6" width="19.6" height="11.2" rx="1.4" fill="url(#lp23)" stroke="#16282a" stroke-width="1.5" stroke-linejoin="round"/><path d="M24.4 15.4 L29.8 12.4 Q31.4 18 29.8 23.6 L24.4 20.8 Z" fill="#5a9c94" stroke="#16282a" stroke-width="1.5" stroke-linejoin="round"/><rect x="10" y="14.2" width="8.6" height="2.2" fill="#16282a"/><rect x="7" y="18.4" width="15" height="1.3" fill="#cfeee8"/><rect x="6" y="21.4" width="17" height="1.6" fill="#3c7c76"/></svg></div><div class="a lbtn" style="left:37px;top:90px"><svg style="left:-1px;top:-1px" width="34" height="34" viewBox="0 0 34 34"><path d="M17 5 L26.6 9.6 V20.6 L17 25.6 L7.4 20.6 V9.6 Z" fill="#b4ece8" stroke="#0c2c2c" stroke-width="1.6"/><path d="M7.4 9.6 L17 14 L26.6 9.6 M17 14 V25.6" stroke="#0c2c2c" stroke-width="1.2" fill="none"/><path d="M17 5 V16.6 L7.4 20.6 M17 16.6 L26.6 20.6" stroke="#5ea4a0" stroke-width=".8" fill="none"/></svg></div><div class="a lbtn" style="left:1px;top:126px"><svg style="left:-1px;top:-1px" width="34" height="34" viewBox="0 0 34 34"><defs><filter id="tb26" x="-10%" y="-10%" width="120%" height="120%"><feGaussianBlur stdDeviation=".55"/></filter></defs><g filter="url(#tb26)"><path d="M3.6 22.4 Q8 19 11 15.6 L14.6 10.4 L16.6 8 L18.6 10 L20 9 L22.4 13 Q27 18 30.6 21.6 Q26 25.4 17 25.2 Q8 25.6 3.6 22.4 Z" fill="#37363c"/><path d="M15.8 9.2 L16.6 8 L18 10.4 L17.4 14 L16.4 11.6 L15 14 Z" fill="#f4f8f8"/><path d="M19.4 9.8 L20 9 L21 11 L20.4 12.4 Z" fill="#dfe8ea"/><path d="M14 14 L10.6 23 M19 13 L23 23 M17 15 V24 M12 17 L7 22.6 M22 15 L27 22" stroke="#8a8e94" stroke-width="1.2"/></g></svg></div><div class="a lbtn" style="left:37px;top:126px"><svg style="left:-1px;top:-1px" width="34" height="34" viewBox="0 0 34 34"><path d="M17 3 L21 7.4 H19 V10 H15 V7.4 H13 Z" fill="#a8e4dc" stroke="#0c2c2c" stroke-width="1.15"/><path d="M17 31 L21 26.6 H19 V24 H15 V26.6 H13 Z" fill="#a8e4dc" stroke="#0c2c2c" stroke-width="1.15"/><path d="M3 17 L7.4 13 V15 H10.4 V19 H7.4 V21 Z" fill="#a8e4dc" stroke="#0c2c2c" stroke-width="1.15"/><path d="M31 17 L26.6 13 V15 H23.6 V19 H26.6 V21 Z" fill="#a8e4dc" stroke="#0c2c2c" stroke-width="1.15"/><path d="M12.6 12.6 H21.4 V15 H20.2 V14.2 H18.2 V20 H19.6 V21.6 H14.4 V20 H15.8 V14.2 H13.8 V15 H12.6 Z" fill="#000"/></svg></div><div class="a lbtn" style="left:1px;top:162px"><svg style="left:-1px;top:-1px" width="34" height="34" viewBox="0 0 34 34"><path d="M2 3 L19 2 L9 20 Z" fill="#dceee8" stroke="#2c5c58" stroke-width="1.4"/><path d="M4.4 5 L15.4 4.4 L9 16 Z" fill="#ece9d8"/><path d="M8 9 L13 13 L32 33 H24 L9.6 15 Z" fill="#77777c" stroke="#1c1c20" stroke-width="1"/><path d="M11 12.4 L30 32.4" stroke="#d4d4d8" stroke-width="1.6"/><ellipse cx="9.6" cy="10.6" rx="3" ry="3.6" fill="#8c6a4c" stroke="#2c1c10" stroke-width=".8"/></svg></div><div class="a lbtn" style="left:37px;top:162px"><svg style="left:-1px;top:-1px" width="34" height="34" viewBox="0 0 34 34"><defs><linearGradient id="ab30" x1="0" y1="0" x2="1" y2="0"><stop offset="0" stop-color="#7ca0e4"/><stop offset="1" stop-color="#2c4c9c"/></linearGradient></defs><path d="M5 6 L10 4 L27 7 L26 28 L20 29 L20 18 Q19 11 15 12 Q12 13 13 19 L13 25 L8 24 Z" fill="url(#ab30)" stroke="#1c2c5c" stroke-width="1"/><path d="M20 29 L20 18 Q19.6 13 17 12.4 Q21 11 22.4 17 L22.6 28.6 Z" fill="#1c3474"/><path d="M5 6 L10 4 L27 7 L22 8.6 Z" fill="#9cbcf4"/></svg></div><div class="a bar" style="top:200px"></div><div class="a tri-u" style="left:57px;top:207px"></div><div class="a lbtn" style="left:1px;top:222px"><svg style="left:-1px;top:-1px" width="34" height="34" viewBox="0 0 34 34"><defs><linearGradient id="lp31" x1="0" y1="0" x2="1" y2="1"><stop offset="0" stop-color="#b8f0ea"/><stop offset=".45" stop-color="#72beb6"/><stop offset="1" stop-color="#1c4e4a"/></linearGradient></defs><path d="M5 9 L17 4.6 L29 8.4 L27 23 L13.6 29 L6 22 Z" fill="url(#lp31)" stroke="#0c2826" stroke-width="1.25" stroke-linejoin="round"/><path d="M5 9 L15 12.4 L29 8.4 M15 12.4 L13.6 29" fill="none" stroke="#0c2c2c" stroke-width=".8"/><path d="M5 9 L17 4.6 L29 8.4 L15 12.4 Z" fill="#c4f4ee" opacity=".8"/></svg></div><div class="a lbtn" style="left:37px;top:222px"><svg style="left:-1px;top:-1px" width="34" height="34" viewBox="0 0 34 34"><defs><linearGradient id="lp32" x1="0" y1="0" x2="1" y2="1"><stop offset="0" stop-color="#b8f0ea"/><stop offset=".45" stop-color="#72beb6"/><stop offset="1" stop-color="#1c4e4a"/></linearGradient></defs><path d="M17 3 L28.6 24 Q28 28.6 17 29 Q6 28.6 5.4 24 Z" fill="url(#lp32)" stroke="#0c2826" stroke-width="1.25" stroke-linejoin="round"/><path d="M17 3 L11 27" stroke="#d4f8f2" stroke-width="1.6" opacity=".7"/></svg></div><div class="a lbtn" style="left:1px;top:258px"><svg style="left:-1px;top:-1px" width="34" height="34" viewBox="0 0 34 34"><defs><linearGradient id="lp33" x1="0" y1="0" x2="1" y2="1"><stop offset="0" stop-color="#b8f0ea"/><stop offset=".45" stop-color="#72beb6"/><stop offset="1" stop-color="#1c4e4a"/></linearGradient></defs><path d="M6 6 L12 5 L14 8 L18 9 L20 13 L24 14 L26 18 L30 22 L28 25 L15 27 L13 22 L7 20 Z" fill="url(#lp33)" stroke="#0c2826" stroke-width="1.25" stroke-linejoin="round"/><path d="M12 5 L12.6 10 L18 11 M18 9 L18.4 14.6 L24 16 M24 14 L24.4 19.6 L29 22.4 M7 11 L12.6 10 M12 16 L18.4 14.6 M15 21.6 L24.4 19.6" stroke="#0c2c2c" stroke-width=".8" fill="none"/></svg></div><div class="a lbtn" style="left:37px;top:258px"><svg style="left:-1px;top:-1px" width="34" height="34" viewBox="0 0 34 34"><defs><linearGradient id="lp34" x1="0" y1="0" x2="1" y2="1"><stop offset="0" stop-color="#b8f0ea"/><stop offset=".45" stop-color="#72beb6"/><stop offset="1" stop-color="#1c4e4a"/></linearGradient></defs><path d="M6 8.6 Q6 4.6 17 4.6 Q28 4.6 28 8.6 V24 Q28 29 17 29 Q6 29 6 24 Z" fill="url(#lp34)" stroke="#0c2826" stroke-width="1.25" stroke-linejoin="round"/><ellipse cx="17" cy="8.6" rx="11" ry="4" fill="#b8f0e8" stroke="#0c2826" stroke-width="1.25" stroke-linejoin="round"/></svg></div><div class="a lbtn" style="left:1px;top:294px"><svg style="left:-1px;top:-1px" width="34" height="34" viewBox="0 0 34 34"><defs><linearGradient id="lp35" x1="0" y1="0" x2="1" y2="1"><stop offset="0" stop-color="#b8f0ea"/><stop offset=".45" stop-color="#72beb6"/><stop offset="1" stop-color="#1c4e4a"/></linearGradient></defs><path d="M4 9 L15 5 L19 7.4 V11 L24 13 V16.6 L29 19 V24 L19 29 L4 22 Z" fill="url(#lp35)" stroke="#0c2826" stroke-width="1.25" stroke-linejoin="round"/><path d="M4 9 L9 12 L19 7.4 M9 12 V16 L14 18.4 L24 13 M14 18.4 V22 L19 24.4 L29 19 M19 24.4 V29" stroke="#0c2c2c" stroke-width=".8" fill="none"/></svg></div><div class="a lbtn" style="left:37px;top:294px"><svg style="left:-1px;top:-1px" width="34" height="34" viewBox="0 0 34 34"><defs><linearGradient id="lp36" x1="0" y1="0" x2="1" y2="1"><stop offset="0" stop-color="#b8f0ea"/><stop offset=".45" stop-color="#72beb6"/><stop offset="1" stop-color="#1c4e4a"/></linearGradient></defs><path d="M3 17 L17 10 L31 15 L19 25 Z" fill="url(#lp36)" stroke="#0c2826" stroke-width="1.25" stroke-linejoin="round"/></svg></div><div class="a lbtn" style="left:1px;top:330px"><svg style="left:-1px;top:-1px" width="34" height="34" viewBox="0 0 34 34"><defs><linearGradient id="lp37" x1="0" y1="0" x2="1" y2="1"><stop offset="0" stop-color="#b8f0ea"/><stop offset=".45" stop-color="#72beb6"/><stop offset="1" stop-color="#1c4e4a"/></linearGradient></defs><path d="M4 8 L9 6 L13 9 L17 10 L19 14 L24 16 L26 20 L31 24 L29 27 L16 28 L14 23 L9 21 L7 15 Z" fill="url(#lp37)" stroke="#0c2826" stroke-width="1.25" stroke-linejoin="round"/><path d="M9 6 L10 11 L17 12.4 M17 10 L17.6 16 L24 18 M24 16 L24.6 21.6 L30 24.6 M5 12 L10 11 M12 18 L17.6 16 M15 23.6 L24.6 21.6" stroke="#0c2c2c" stroke-width=".8" fill="none"/></svg></div><div class="a lbtn" style="left:37px;top:330px"><svg style="left:-1px;top:-1px" width="34" height="34" viewBox="0 0 34 34"><defs><radialGradient id="sp39" cx=".55" cy=".35" r=".7"><stop offset="0" stop-color="#e8fffc"/><stop offset=".3" stop-color="#8cd4cc"/><stop offset="1" stop-color="#1c5450"/></radialGradient></defs><circle cx="17" cy="17" r="12" fill="url(#sp39)" stroke="#0c2c2c" stroke-width="1"/></svg></div><div class="a lbtn" style="left:1px;top:366px"><svg style="left:-1px;top:-1px" width="34" height="34" viewBox="0 0 34 34"><defs><linearGradient id="lp40" x1="0" y1="0" x2="1" y2="1"><stop offset="0" stop-color="#b8f0ea"/><stop offset=".45" stop-color="#72beb6"/><stop offset="1" stop-color="#1c4e4a"/></linearGradient></defs><g transform="translate(0,-6)"><path d="M11.4 10.6 L17.4 14 L17.4 32 L11.4 28.4 Z" fill="#bff2ee" stroke="#0c2826" stroke-width="1.25" stroke-linejoin="round"/><path d="M24 10.2 L17.4 14 L17.4 32 L24 28.2 Z" fill="#8fd2cc" stroke="#0c2826" stroke-width="1.25" stroke-linejoin="round"/><path d="M9.4 16.6 L17.4 13.6 L17.4 31.6 L9.4 36 Z" fill="url(#lp40)" stroke="#0c2826" stroke-width="1.25" stroke-linejoin="round" opacity=".92"/><path d="M26 16.4 L17.4 13.6 L17.4 31.6 L26 35.8 Z" fill="url(#lp40)" stroke="#0c2826" stroke-width="1.25" stroke-linejoin="round" opacity=".92"/><path d="M17.4 13.6 V31.6" stroke="#0c2c2c" stroke-width="1"/></g></svg></div><div class="a bar" style="top:403px"></div><div class="a tri-u" style="left:57px;top:410px"></div><div class="a lbtn" style="left:1px;top:426px"><svg style="left:-1px;top:-1px" width="34" height="34" viewBox="0 0 34 34"><defs><linearGradient id="sq42" x1="0" y1="0" x2="1" y2="1"><stop offset="0" stop-color="#3c84c8"/><stop offset="1" stop-color="#1c3c84"/></linearGradient></defs><rect x="12" y="5" width="16" height="16" fill="url(#sq42)" stroke="#d41c24" stroke-width="1.4" /><defs><linearGradient id="sq43" x1="0" y1="0" x2="1" y2="1"><stop offset="0" stop-color="#b4e4d8"/><stop offset="1" stop-color="#4c9088"/></linearGradient></defs><rect x="5" y="14" width="15" height="15" fill="url(#sq43)" stroke="#0c2c2c" stroke-width="1" /></svg></div><div class="a lbtn" style="left:37px;top:426px"><svg style="left:-1px;top:-1px" width="34" height="34" viewBox="0 0 34 34"><defs><linearGradient id="sq45" x1="0" y1="0" x2="1" y2="1"><stop offset="0" stop-color="#3c84c8"/><stop offset="1" stop-color="#1c3c84"/></linearGradient></defs><rect x="12" y="5" width="17" height="17" fill="url(#sq45)" stroke="#0c2c2c" stroke-width="1" /><defs><linearGradient id="sq46" x1="0" y1="0" x2="1" y2="1"><stop offset="0" stop-color="#b4e4d8"/><stop offset="1" stop-color="#4c9088"/></linearGradient></defs><rect x="5" y="13" width="15" height="15" fill="url(#sq46)" stroke="#0c2c2c" stroke-width="1" /><path d="M12 13 H20 V22" fill="none" stroke="#d41c24" stroke-width="1.4"/><path d="M12.6 13 V22 H20" fill="none" stroke="#0c2c2c" stroke-width="1"/></svg></div><div class="a lbtn" style="left:1px;top:462px"><svg style="left:-1px;top:-1px" width="34" height="34" viewBox="0 0 34 34"><defs><linearGradient id="sq48" x1="0" y1="0" x2="1" y2="1"><stop offset="0" stop-color="#3c84c8"/><stop offset="1" stop-color="#1c3c84"/></linearGradient></defs><rect x="12" y="5" width="16" height="16" fill="url(#sq48)" stroke="#0c2c2c" stroke-width="1" stroke-dasharray="2 1.4"/><defs><linearGradient id="sq49" x1="0" y1="0" x2="1" y2="1"><stop offset="0" stop-color="#b4e4d8"/><stop offset="1" stop-color="#4c9088"/></linearGradient></defs><rect x="5" y="14" width="15" height="15" fill="url(#sq49)" stroke="#0c2c2c" stroke-width="1" stroke-dasharray="2 1.4"/><rect x="12.6" y="14" width="7" height="6.6" fill="#3c84c8" stroke="#d41c24" stroke-width="1.4"/></svg></div><div class="a lbtn" style="left:37px;top:462px"><svg style="left:-1px;top:-1px" width="34" height="34" viewBox="0 0 34 34"><defs><linearGradient id="sq51" x1="0" y1="0" x2="1" y2="1"><stop offset="0" stop-color="#b4e4d8"/><stop offset="1" stop-color="#4c9088"/></linearGradient></defs><rect x="5" y="14" width="15" height="15" fill="url(#sq51)" stroke="#0c2c2c" stroke-width="1" stroke-dasharray="2 1.4"/><defs><linearGradient id="sq52" x1="0" y1="0" x2="1" y2="1"><stop offset="0" stop-color="#3c84c8"/><stop offset="1" stop-color="#1c3c84"/></linearGradient></defs><rect x="13" y="5" width="16" height="16" fill="url(#sq52)" stroke="#d41c24" stroke-width="1.4" /><rect x="13" y="14" width="7" height="7" fill="#8cc4bc" stroke="#0c2c2c" stroke-width=".8" stroke-dasharray="2 1.4"/></svg></div><div class="a bar" style="top:499px"></div><div class="a tri-u" style="left:57px;top:506px"></div><div class="a lbtn" style="left:1px;top:522px"><svg style="left:-1px;top:-1px" width="34" height="34" viewBox="0 0 34 34"><defs><linearGradient id="sq54" x1="0" y1="0" x2="1" y2="1"><stop offset="0" stop-color="#3c84c8"/><stop offset="1" stop-color="#1c3c84"/></linearGradient></defs><rect x="5" y="6" width="24" height="24" fill="url(#sq54)" stroke="#0c2c2c" stroke-width="1" /><rect x="10" y="11" width="14" height="14" fill="none" stroke="#0c1c3c" stroke-width="1" stroke-dasharray="2.2 1.6"/></svg></div><div class="a lbtn" style="left:37px;top:522px"><svg style="left:-1px;top:-1px" width="34" height="34" viewBox="0 0 34 34"><defs><linearGradient id="vc56" x1="0" y1="0" x2="1" y2="1"><stop offset="0" stop-color="#b4ccf8"/><stop offset="1" stop-color="#2c4c9c"/></linearGradient></defs><path d="M6 10 L17 4 L29 8 L28 22 L17 30 L6 23 Z" fill="url(#vc56)" stroke="#2c3c6c" stroke-width="1"/><path d="M6 10 L16 14 L29 8 M16 14 L17 30" stroke="#d4e0fc" stroke-width="1" fill="none"/></svg></div><div class="a bar" style="top:559px"></div><div class="a tri-u" style="left:57px;top:566px"></div><div class="a lbtn" style="left:1px;top:582px"><svg style="left:-1px;top:-1px" width="34" height="34" viewBox="0 0 34 34"><path d="M5 10 Q11 3.6 18 5 Q24 6 28 10 Q22 15 15 14.4 Q9 14 5 10 Z" fill="#8c9c9c" stroke="#2c3434" stroke-width="1"/><ellipse cx="16" cy="9.6" rx="7" ry="3.6" fill="#e4ecec"/><circle cx="16" cy="9.6" r="3.2" fill="#1c2424"/><path d="M12 15 V27 H26 V12" fill="none" stroke="#dc1c1c" stroke-width="2" stroke-dasharray="3 1.6"/></svg></div><div class="a lbtn" style="left:37px;top:582px"><svg style="left:-1px;top:-1px" width="34" height="34" viewBox="0 0 34 34"><path d="M5 10 Q11 3.6 18 5 Q24 6 28 10 Q22 15 15 14.4 Q9 14 5 10 Z" fill="#8c9c9c" stroke="#2c3434" stroke-width="1"/><path d="M6 10 Q16 13 27 10" stroke="#1c2424" stroke-width="1.6" fill="none"/><path d="M12 15 V27 H26 V12" fill="none" stroke="#dc1c1c" stroke-width="2" stroke-dasharray="3 1.6"/></svg></div><div class="a lbtn" style="left:1px;top:618px"><svg style="left:-1px;top:-1px" width="34" height="34" viewBox="0 0 34 34"><rect x="5" y="5" width="24" height="24" fill="#a8d8d0" stroke="#0c2c2c" stroke-width="1"/><path d="M5 5 H29 V29 Z" fill="#1c2c2c"/><rect x="21" y="8" width="5" height="5" fill="#a8d8d0" stroke="#d4f4ee" stroke-width=".6"/><rect x="8" y="20" width="6" height="6" fill="#3c6c68" stroke="#0c2c2c" stroke-width=".8"/></svg></div><div class="a lbtn" style="left:37px;top:618px"><svg style="left:-1px;top:-1px" width="34" height="34" viewBox="0 0 34 34"><path d="M6 9 Q12 3 19 4.4 Q25 5.4 29 9 Q23 14 16 13.4 Q10 13 6 9 Z" fill="#a8acac" opacity=".8"/><circle cx="17" cy="8.6" r="3" fill="#6c7474" opacity=".8"/><path d="M7 15 H13 L17 19.6 L22 14 H29 L21 22.6 L28 31 H21.6 L17 26 L12.6 31 H5.6 L13 22.4 Z" fill="#a8dcd4" stroke="#0c2c2c" stroke-width="1.1"/></svg></div>
<div class="a" style="left:2px;top:1062px;width:346px;height:20px;box-sizing:border-box;border:1px solid #7f9db9;background:#fff"></div><div class="a" style="left:331px;top:1064px;width:15px;height:16px;border-radius:2px;background:linear-gradient(180deg,#cbd9fb,#b6c8f4)"></div><svg style="left:334px;top:1069px" width="9" height="6" viewBox="0 0 9 6" ><path d="M.8 .8 L4.5 4.4 L8.2 .8" fill="none" stroke="#3c507c" stroke-width="1.9"/></svg><div class="a sep" style="left:350.5px;top:1060px;height:20px"></div><div class="a fld jp" style="left:1346px;top:1061px;width:60px">なし</div><div class="a fld jp" style="left:1408px;top:1061px;width:60px">なし</div><div class="a fld jp" style="left:1470px;top:1061px;width:60px">なし</div><div class="a fld jp" style="left:1532px;top:1061px;width:60px">なし</div><svg style="left:1596px;top:1063px" width="12" height="12" viewBox="0 0 12 12" ><path d="M1.5 0 V11.5 H12 M1.5 3 H7 M1.5 6 H9 M1.5 9 H11 M4.5 2 V11.5 M7.5 4 V11.5" stroke="#222" stroke-width="1" fill="none"/></svg><div class="a tx" style="left:1610px;top:1062.5px;font-size:13.5px;line-height:15px;letter-spacing:-.6px">16</div><div class="a chk" style="left:1641px;top:1062.5px"></div><svg style="left:1643px;top:1064.5px" width="9" height="9" viewBox="0 0 9 9" ><path d="M1 4 L3.4 6.6 L8 1.2" fill="none" stroke="#21a121" stroke-width="1.9"/></svg><div class="a dd" style="left:1658px;top:1062px"></div><div class="a" style="left:1661px;top:1068px;width:0;height:0;border-left:2.5px solid transparent;border-right:2.5px solid transparent;border-top:3px solid #000"></div><div class="a sep" style="left:1674.5px;top:1060px;height:20px"></div><svg style="left:1678px;top:1062.5px" width="14" height="13" viewBox="0 0 14 13" ><path d="M1 11.5 L5.6 1.6 H8 L9.6 5 M1 11.5 H10" stroke="#111" stroke-width="1.2" fill="none"/><path d="M9 9.6 H13.4 L11.2 12.6 Z" fill="#111"/><circle cx="7" cy="1.4" r="1.2" fill="#111"/></svg><div class="a tx" style="left:1693px;top:1062.5px;font-size:13.5px;line-height:15px;letter-spacing:-.4px">~6</div><div class="a chk" style="left:1723px;top:1062.5px"></div><svg style="left:1725px;top:1064.5px" width="9" height="9" viewBox="0 0 9 9" ><path d="M1 4 L3.4 6.6 L8 1.2" fill="none" stroke="#21a121" stroke-width="1.9"/></svg><div class="a dd" style="left:1740px;top:1062px"></div><div class="a" style="left:1743px;top:1068px;width:0;height:0;border-left:2.5px solid transparent;border-right:2.5px solid transparent;border-top:3px solid #000"></div><div class="a sep" style="left:1757.5px;top:1060px;height:20px"></div><div class="a tx" style="left:1761px;top:1062.5px;font-size:13.5px;line-height:15px;letter-spacing:-.9px">5%</div><div class="a chk" style="left:1799px;top:1062.5px"></div><svg style="left:1801px;top:1064.5px" width="9" height="9" viewBox="0 0 9 9" ><path d="M1 4 L3.4 6.6 L8 1.2" fill="none" stroke="#21a121" stroke-width="1.9"/></svg><div class="a dd" style="left:1816px;top:1062px"></div><div class="a" style="left:1819px;top:1068px;width:0;height:0;border-left:2.5px solid transparent;border-right:2.5px solid transparent;border-top:3px solid #000"></div><div class="a sep" style="left:1833.5px;top:1060px;height:20px"></div><svg style="left:1839px;top:1062px" width="15" height="15" viewBox="0 0 15 15" ><rect x="1" y="2" width="12" height="10" fill="#8c8c88"/><rect x="0" y="0" width="2.4" height="12" fill="#b4a46c"/><rect x="11" y="0" width="2.4" height="12" fill="#b4a46c"/><path d="M4 8.6 L7.4 12 L14 4" fill="none" stroke="#000" stroke-width="4.4"/><path d="M4 8.6 L7.4 12 L14 4" fill="none" stroke="#1cd41c" stroke-width="2.6"/></svg><div class="a chk" style="left:1866px;top:1062.5px"></div><svg style="left:1868px;top:1064.5px" width="9" height="9" viewBox="0 0 9 9" ><path d="M1 4 L3.4 6.6 L8 1.2" fill="none" stroke="#21a121" stroke-width="1.9"/></svg><div class="a dd" style="left:1883px;top:1062px"></div><div class="a" style="left:1886px;top:1068px;width:0;height:0;border-left:2.5px solid transparent;border-right:2.5px solid transparent;border-top:3px solid #000"></div><div class="a sep" style="left:1898.5px;top:1060px;height:20px"></div>
<div class="a" style="left:1918px;top:0;width:2px;height:1080px;background:linear-gradient(180deg,#4a9af8 0,#3a86ee 24px,#3a84ec 100%)"></div>
</body></html>
